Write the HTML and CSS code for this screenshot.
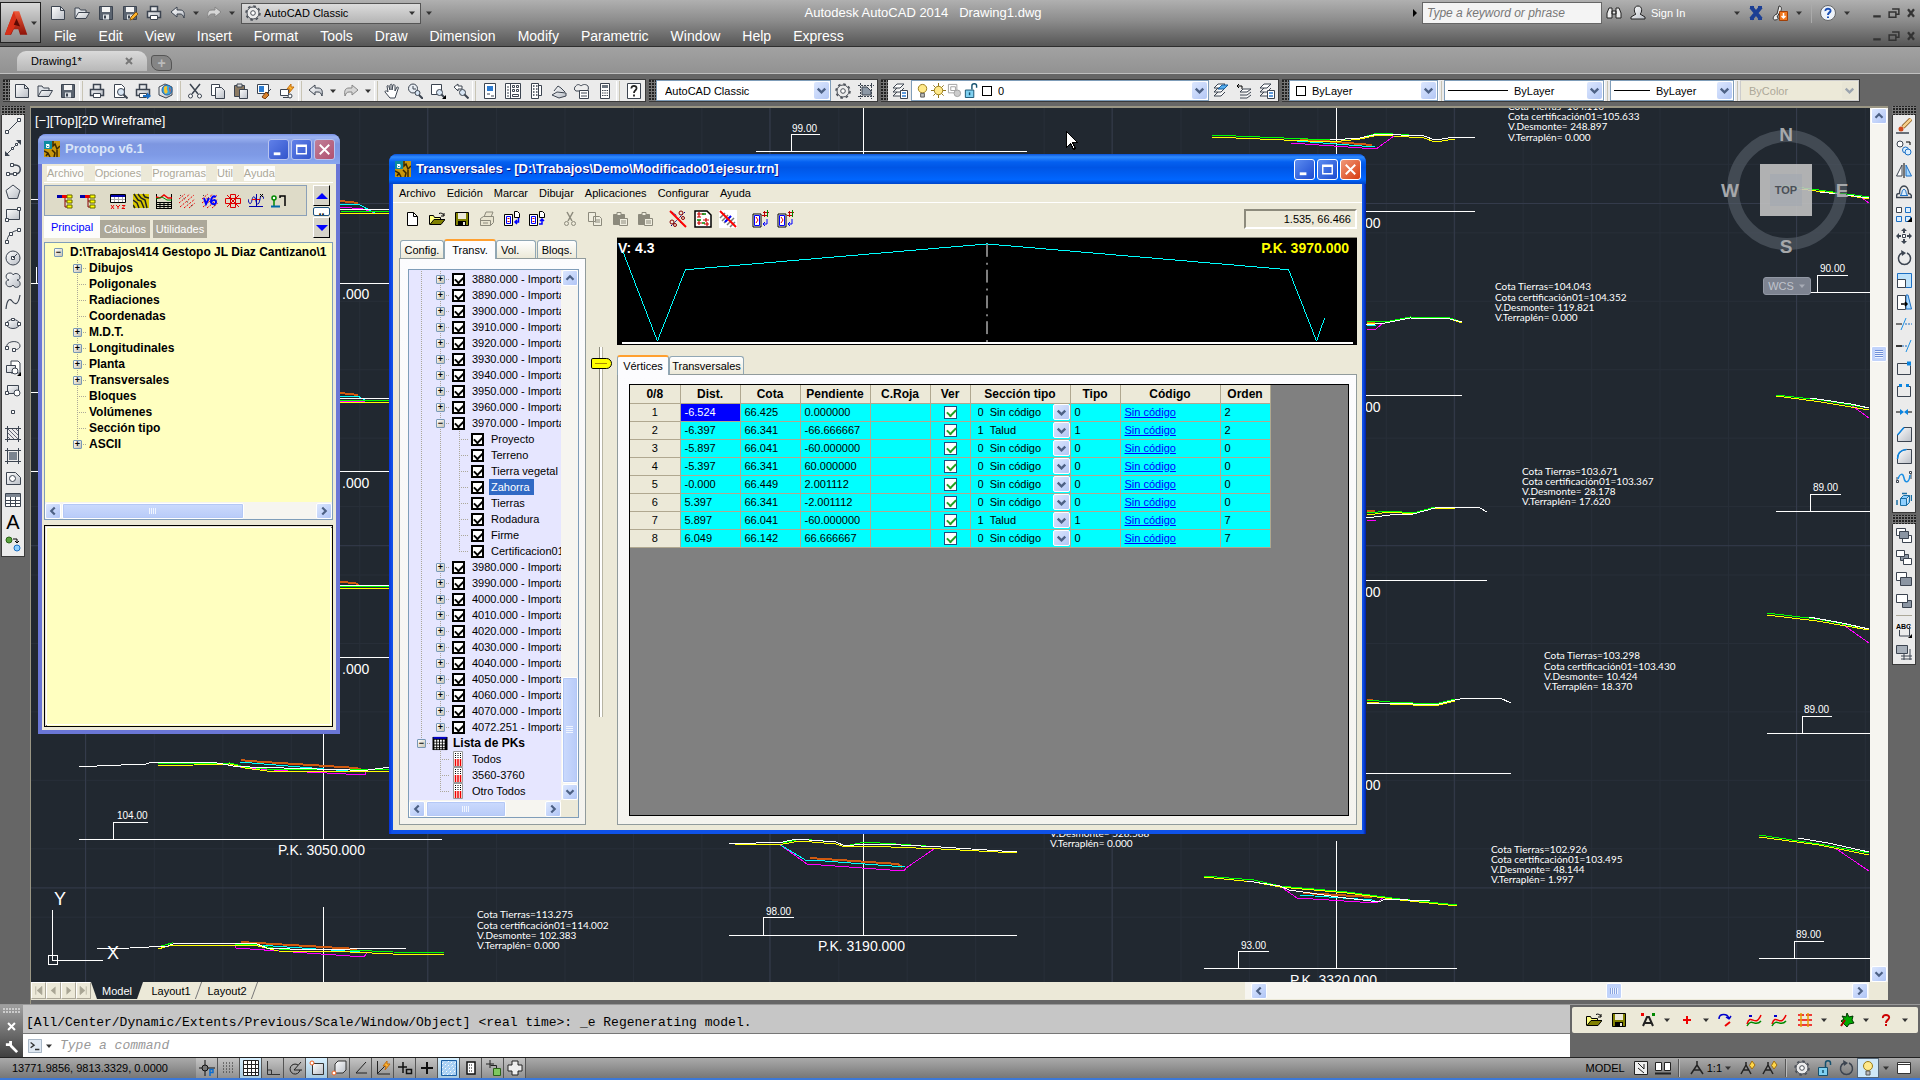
FILE: index.html
```html
<!DOCTYPE html>
<html lang="es">
<head>
<meta charset="utf-8">
<title>Autodesk AutoCAD 2014 - Drawing1.dwg</title>
<link rel="stylesheet" href="styles.css">
</head>
<body>
<svg class="defs" aria-hidden="true">
<linearGradient id="gl" x1="0" y1="0" x2="1" y2="1"><stop offset="0" stop-color="#fff"/><stop offset="1" stop-color="#b9bec6"/></linearGradient>
<linearGradient id="gr" x1="0" y1="0" x2="0" y2="1"><stop offset="0" stop-color="#f05a3a"/><stop offset="1" stop-color="#8e1208"/></linearGradient>
<g fill="none" stroke="#3c4450" stroke-width="1">
<symbol id="new" viewBox="0 0 16 16"><path d="M1.500 1.500h9l4 4v9h-13z" fill="url(#gl)" stroke="#3c4450"/><path d="M10.500 1.500v4h4" fill="none" stroke="#3c4450"/></symbol>
<symbol id="open" viewBox="0 0 16 16"><path d="M1 13V3h4l1.500 2H12v3" fill="#dfe3e8" stroke="#3c4450"/><path d="M1 13.500 4.500 7.500h11L12 13.500z" fill="url(#gl)" stroke="#3c4450"/></symbol>
<symbol id="save" viewBox="0 0 16 16"><path d="M1.500 1.500h13v13h-13z" fill="#5b6470" stroke="#3c4450"/><path d="M4 2h8v5H4z" fill="#f4f4f4"/><path d="M5 9.500h6v5H5z" fill="#e0e4e8"/><path d="M6 10.500h2v3H6z" fill="#3c4450"/></symbol>
<symbol id="saveas" viewBox="0 0 16 16"><use href="#save"/><path d="m8 15 1-3 5-5 2 2-5 5z" fill="#ffb52e" stroke="#8a5a10"/></symbol>
<symbol id="print" viewBox="0 0 16 16"><path d="M4.500 6V1.500h7V6M1.500 6.500h13v6h-13z" fill="url(#gl)" stroke="#3c4450" stroke-width="1.500"/><path d="M4.500 10.500h7v4h-7z" fill="#fff" stroke="#3c4450"/></symbol>
<symbol id="preview" viewBox="0 0 16 16"><path d="M2.500 1.500h7l3 3v10h-10z" fill="#fff" stroke="#3c4450"/><circle cx="9" cy="9" r="3.500" fill="#d8e6f5" stroke="#3c4450"/><path d="m11.500 11.500 4 4" stroke="#3c4450" stroke-width="2"/></symbol>
<symbol id="publish" viewBox="0 0 16 16"><use href="#print"/><path d="M8 12h4v-2.500l4 3.500-4 3.500V14H8z" fill="#1b6fc4"/></symbol>
<symbol id="globe" viewBox="0 0 16 16"><path d="m1 4 6-3 7 3v8l-6 3-7-3z" fill="url(#gl)" stroke="#3c4450"/><circle cx="9" cy="7" r="5" fill="#3ba7e0" stroke="#2560a0"/><path d="M6 4c2-2 4-1 3 1s2 3 0 5-3-1-3-3z" fill="#f4c430"/><path d="M11 4c2 1 2 4 1 6z" fill="#e0442c"/></symbol>
<symbol id="cut" viewBox="0 0 16 16"><path d="m3 1 8 10M13 1 5 11" stroke="#3c4450" stroke-width="1.500"/><circle cx="3.500" cy="13" r="2" fill="#fff" stroke="#3c4450"/><circle cx="12.500" cy="13" r="2" fill="#fff" stroke="#3c4450"/></symbol>
<symbol id="copy" viewBox="0 0 16 16"><path d="M1.500 1.500h8v11h-8z" fill="#fff" stroke="#3c4450"/><path d="M5.500 4.500h6l3 3v8h-9z" fill="url(#gl)" stroke="#3c4450"/></symbol>
<symbol id="paste" viewBox="0 0 16 16"><path d="M1.500 2.500h10v11h-10z" fill="#8b7a62" stroke="#3c4450"/><path d="M4 1h5v3H4z" fill="#ddd" stroke="#3c4450"/><path d="M6.500 6.500h8v9h-8z" fill="url(#gl)" stroke="#3c4450"/></symbol>
<symbol id="match" viewBox="0 0 16 16"><path d="M1.500 1.500h11v9h-11z" fill="#fff" stroke="#3c4450"/><path d="M3 3h5v6H3z" fill="#2c7bd0"/><path d="m15 6-5 5" stroke="#3c4450"/><path d="m6 14 4-5 3 3-4 4z" fill="#d8822c" stroke="#7a3c0c"/></symbol>
<symbol id="block" viewBox="0 0 16 16"><path d="M1.500 6.500h8v6h-8zM4 14.500h8" fill="#fff" stroke="#3c4450"/><circle cx="11" cy="13" r="2" fill="#fff" stroke="#3c4450"/><path d="m12 1-4 5h3l-1 4 5-6h-3z" fill="#ffb52e" stroke="#c06c10"/></symbol>
<symbol id="undo" viewBox="0 0 16 16"><path d="M1 7 7 2v3h3c4 0 5 3 4 8-1-3-2-4-4-4H7v3z" fill="url(#gl)" stroke="#3c4450"/></symbol>
<symbol id="redo" viewBox="0 0 16 16"><path d="M15 7 9 2v3H6C2 5 1 8 2 13c1-3 2-4 4-4h3v3z" fill="#d6d6d6" stroke="#858585"/></symbol>
<symbol id="pan" viewBox="0 0 16 16"><path d="M6 15 1 9c0-2 2-1 3 0L3 3c1-1 2 0 2 1l1 3V2c1-1 2-1 2 0v5l1-5c1-1 2 0 2 1v5l2-4c1 0 2 0 1 2l-2 6-1 3z" fill="#fff" stroke="#3c4450"/></symbol>
<symbol id="zoomrt" viewBox="0 0 16 16"><circle cx="6" cy="5.500" r="4.500" fill="#e8edf3" stroke="#3c4450"/><path d="M6 3v3h3" fill="none" stroke="#3c4450"/><circle cx="10.500" cy="10" r="2.500" fill="#d8e6f5" stroke="#3c4450"/><path d="m12 12 4 4" stroke="#3c4450" stroke-width="2"/></symbol>
<symbol id="zoomw" viewBox="0 0 16 16"><path d="M1.500 1.500h10v10h-10z" fill="#fff" stroke="#3c4450"/><circle cx="9.500" cy="9.500" r="3" fill="#d8e6f5" stroke="#3c4450"/><path d="m11.500 11.500 3 3" stroke="#3c4450" stroke-width="2"/><path d="M16 12v4h-4z" fill="#000"/></symbol>
<symbol id="zoomp" viewBox="0 0 16 16"><path d="m1 4 4-3v2h4v3H5v2z" fill="#fff" stroke="#3c4450"/><circle cx="9.500" cy="9.500" r="3" fill="#d8e6f5" stroke="#3c4450"/><path d="m11.500 11.500 4 4" stroke="#3c4450" stroke-width="2"/></symbol>
<symbol id="props" viewBox="0 0 16 16"><path d="M2.500 .5h11v15h-11z" fill="#fff" stroke="#3c4450"/><path d="M5 3h6v5H5z" fill="#2c7bd0"/><path d="M5 11h3M9 13h3" stroke="#3c4450"/></symbol>
<symbol id="dcenter" viewBox="0 0 16 16"><path d="M.5 .5h15v15H.5zM5.500 .5v15" fill="#fff" stroke="#3c4450"/><path d="M2 4h2M2 7h2M2 10h2M2 13h2M7.500 2.500h2v2h-2zM11.500 2.500h2v2h-2zM7.500 6.500h2v2h-2zM11.500 6.500h2v2h-2zM7.500 11.500h6v2h-6z" fill="none" stroke="#3c4450"/></symbol>
<symbol id="palette" viewBox="0 0 16 16"><path d="M3.500 .5h7v15h-7zM10.500 2.500h3v10h-3" fill="#fff" stroke="#3c4450"/><path d="M5 3h1.500M5 6h1.500M5 9h1.500M5 12h1.500M8 3h1.500M8 6h1.500M8 9h1.500M8 12h1.500" stroke="#3c4450" stroke-width="1.500"/></symbol>
<symbol id="sheet" viewBox="0 0 16 16"><path d="m1 12 5-3 9 1v3l-7 2zM3 8l4-5 3 2 4 4" fill="url(#gl)" stroke="#3c4450"/></symbol>
<symbol id="markup" viewBox="0 0 16 16"><path d="M1 4c2-3 4-3 6-1 2-2 5-2 7 0 1 3 0 4-1 5H2C0 7 0 5 1 4z" fill="#eee" stroke="#3c4450"/><path d="M5.500 7.500h9v8h-9z" fill="#fff" stroke="#3c4450"/><path d="M7 10h6M7 13h6" stroke="#3c4450"/></symbol>
<symbol id="calc" viewBox="0 0 16 16"><path d="M3.500 .5h9v15h-9z" fill="#fff" stroke="#3c4450"/><path d="M5 2h6v3H5z" fill="#6c7580"/><path d="M5 7.500h6M5 10h6M5 12.500h6" stroke="#3c4450" stroke-dasharray="1.500 .8"/></symbol>
<symbol id="help" viewBox="0 0 16 16"><path d="M1.500 .5h13v15h-13z" fill="#fff" stroke="#3c4450"/><path d="M5.500 5.500C5 2 11 2 10.500 5.500 10 8 8 7 8 10M8 11.500v2" fill="none" stroke="#222" stroke-width="1.800"/></symbol>
<symbol id="gear" viewBox="0 0 16 16"><circle cx="8" cy="8" r="6" fill="#ececec" stroke="#4a4f57"/><circle cx="8" cy="8" r="7" fill="none" stroke="#4a4f57" stroke-width="1.500" stroke-dasharray="2.700 2.800"/><circle cx="8" cy="8" r="2.300" fill="#fff" stroke="#4a4f57"/></symbol>
<symbol id="wsp" viewBox="0 0 16 16"><path d="M2.500 0v16M13.500 0v16M0 2.500h16M0 13.500h16" stroke="#3c4450" stroke-dasharray="2 1"/><path d="M4 12V4h5l4 4v4z" fill="#8c98a6" stroke="#3c4450"/></symbol>
<symbol id="layers" viewBox="0 0 16 16"><path d="m1 5 4-4h7L8 5zM1 9l4-4M1 9h7l4-4M1 13l4-4M1 13h7l4-4" fill="#fff" stroke="#3c4450"/></symbol>
<symbol id="layerp" viewBox="0 0 16 16"><use href="#layers"/><path d="M8.500 7.500h7v8h-7z" fill="#fff" stroke="#3c4450"/><path d="M10 10h4M10 13h4" stroke="#2c7bd0" stroke-width="1.500"/></symbol>
<symbol id="layer2" viewBox="0 0 16 16"><use href="#layers"/><path d="m5 6 4-4h6l-4 4z" fill="#55aef0" stroke="#1b5f9c"/></symbol>
<symbol id="layer3" viewBox="0 0 16 16"><path d="m4 9 3-3h8l-4 3zM4 12h7l4-3M4 15h7l4-3" fill="#fff" stroke="#3c4450"/><path d="M1 3h5v3M1 3l2-2M1 3l2 2" fill="none" stroke="#000"/></symbol>
<symbol id="bulb" viewBox="0 0 16 16"><circle cx="8" cy="6" r="4.500" fill="#ffe98a" stroke="#9a7b18"/><path d="M6 11h4v4H6z" fill="#bbb" stroke="#555"/></symbol>
<symbol id="sun" viewBox="0 0 16 16"><path d="M8 0v16M0 8h16M2.500 2.500l11 11M13.500 2.500l-11 11" stroke="#8a6d10"/><circle cx="8" cy="8" r="4.500" fill="#ffe98a" stroke="#9a7b18"/></symbol>
<symbol id="vpf" viewBox="0 0 16 16"><path d="M1.500 1.500h9v9h-9zM4 4h5v4H4z" fill="#fff" stroke="#a0a0a0"/><circle cx="11" cy="11" r="3.500" fill="#ccc" stroke="#a0a0a0"/></symbol>
<symbol id="lock" viewBox="0 0 16 16"><path d="M9.500 7V3c0-3 5-3 5 0v2" fill="none" stroke="#14506e" stroke-width="1.500"/><path d="M2.500 7.500h9v8h-9z" fill="#7fd0f0" stroke="#14506e"/><path d="M7 10v3" stroke="#14506e" stroke-width="1.500"/></symbol>
<symbol id="down" viewBox="0 0 16 16"><path d="m4 6 4 4 4-4" fill="none" stroke="#4d6185" stroke-width="2.500"/></symbol>
<symbol id="tri" viewBox="0 0 8 8"><path d="M1 2.500h6L4 6z" fill="#333"/></symbol>
<symbol id="line" viewBox="0 0 16 16"><path d="M2 14 14 2" stroke="#3c4450"/><path d="M.5 12.500h3v3h-3zM12.500 .5h3v3h-3z" fill="#fff" stroke="#3c4450"/></symbol>
<symbol id="xline" viewBox="0 0 16 16"><path d="M2 14 14 2" fill="none" stroke="#3c4450"/><path d="M16 0v5l-5-5zM0 16v-5l5 5z" fill="#3c4450"/><path d="M6.500 7.500h2v2h-2zM10.500 3.500h2v2h-2z" fill="#fff" stroke="#3c4450"/></symbol>
<symbol id="pline" viewBox="0 0 16 16"><path d="M6 3h4c7 0 7 9 0 9H3" fill="none" stroke="#3c4450" stroke-width="1.500"/><path d="M5.500 1.500h3v3h-3zM1.500 10.500h3v3h-3zM8.500 10.500h3v3h-3z" fill="#fff" stroke="#3c4450"/></symbol>
<symbol id="poly" viewBox="0 0 16 16"><path d="m8 1 7 5.500-2.500 8h-9L1 6.500z" fill="url(#gl)" stroke="#3c4450"/></symbol>
<symbol id="rect" viewBox="0 0 16 16"><path d="M1.500 3.500h13v10h-13z" fill="url(#gl)" stroke="#3c4450"/><path d="M.5 12.500h3v3h-3zM12.500 1.500h3v3h-3z" fill="#fff" stroke="#3c4450"/></symbol>
<symbol id="arc" viewBox="0 0 16 16"><path d="M2 14C2 7 7 3 14 2" fill="none" stroke="#3c4450"/><path d="M.5 12.500h3v3h-3zM4.500 4.500h3v3h-3zM12.500 .5h3v3h-3z" fill="#fff" stroke="#3c4450"/></symbol>
<symbol id="circle" viewBox="0 0 16 16"><circle cx="8" cy="8" r="7" fill="url(#gl)" stroke="#3c4450"/><path d="m8 8 4-4M6.500 6.500h3v3h-3z" stroke="#3c4450" fill="#fff"/></symbol>
<symbol id="cloud" viewBox="0 0 16 16"><path d="M4 8C0 7 0 1 5 1c2 0 3 1 3 2 2-3 7-1 7 2 0 2-1 3-3 3 4 1 4 6 1 7-2 1-4 0-5-2-2 3-7 2-7-2 0-2 1-3 3-3z" fill="url(#gl)" stroke="#3c4450"/></symbol>
<symbol id="spline" viewBox="0 0 16 16"><path d="M1 15C2 5 5 4 7 7s6 6 8-6" fill="none" stroke="#3c4450" stroke-width="1.200"/></symbol>
<symbol id="ellipse" viewBox="0 0 16 16"><ellipse cx="8" cy="8" rx="6.500" ry="4.500" fill="url(#gl)" stroke="#3c4450"/><path d="M.5 6.500h3v3h-3zM12.500 6.500h3v3h-3zM6.500 2.500h3v2h-3z" fill="#fff" stroke="#3c4450"/></symbol>
<symbol id="earc" viewBox="0 0 16 16"><path d="M2 9c-2-6 13-8 13-1 0 3-4 4-7 4" fill="none" stroke="#3c4450"/><path d="M.5 8.500h3v3h-3zM7.500 10.500h3v3h-3z" fill="#fff" stroke="#3c4450"/></symbol>
<symbol id="insert" viewBox="0 0 16 16"><path d="M6 1h7l2 2v10H6z" fill="#fff" stroke="#3c4450"/><path d="M1.500 5.500h9v7h-9z" fill="url(#gl)" stroke="#3c4450"/><circle cx="10" cy="11" r="3" fill="#fff" stroke="#3c4450"/><path d="M16 12v4h-4z" fill="#000"/></symbol>
<symbol id="mkblock" viewBox="0 0 16 16"><path d="M2.500 3.500h11v8h-11z" fill="url(#gl)" stroke="#3c4450"/><circle cx="12" cy="11" r="3" fill="#fff" stroke="#3c4450"/><path d="M.5 9.500h3v3h-3z" fill="#fff" stroke="#3c4450"/></symbol>
<symbol id="point" viewBox="0 0 16 16"><path d="M6.500 6.500h3v3h-3z" fill="#fff" stroke="#3c4450"/></symbol>
<symbol id="hatch" viewBox="0 0 16 16"><path d="M2.500 0v16M13.500 0v16M0 2.500h16M0 13.500h16" stroke="#3c4450"/><path d="m3 3 10 10M3 7l6 6M7 3l6 6M3 11l2 2M11 3l2 2" stroke="#667"/></symbol>
<symbol id="grad" viewBox="0 0 16 16"><path d="M2.500 0v16M13.500 0v16M0 2.500h16M0 13.500h16" stroke="#3c4450"/><path d="M4 4h8v8H4z" fill="#7b8490"/></symbol>
<symbol id="region" viewBox="0 0 16 16"><path d="M1.500 2.500h9l5 5v7h-14z" fill="url(#gl)" stroke="#3c4450"/><circle cx="7.500" cy="8.500" r="3" fill="#fff" stroke="#3c4450"/></symbol>
<symbol id="table" viewBox="0 0 16 16"><path d="M.5 1.500h15v13H.5z" fill="#fff" stroke="#3c4450"/><path d="M1 2h14v3H1z" fill="#7b8490"/><path d="M.5 8.500h15M.5 11.500h15M5.500 5v9M10.500 5v9" stroke="#3c4450"/></symbol>
<symbol id="addsel" viewBox="0 0 16 16"><circle cx="4" cy="4" r="3" fill="#5aa33c" stroke="#2c6418"/><circle cx="12" cy="12" r="3" fill="#8fd0ff" stroke="#1b6fc4"/><path d="M8 3h4v4M10 5l2 2 2-2" fill="none" stroke="#000"/></symbol>
<symbol id="erase" viewBox="0 0 16 16"><path d="M15 1 7 9" stroke="#7a4a10" stroke-width="4"/><path d="M15 1 7 9" stroke="#f6cf8a" stroke-width="2.500"/><circle cx="5" cy="11" r="2.500" fill="#d14a1c"/><path d="M0 15h13" stroke="#3c4450" stroke-width="1.500"/></symbol>
<symbol id="copyo" viewBox="0 0 16 16"><circle cx="4" cy="4" r="3" fill="#fff" stroke="#3c4450"/><circle cx="9.500" cy="10" r="3" fill="#dcefff" stroke="#1b6fc4"/><circle cx="12" cy="12" r="3" fill="#dcefff" stroke="#1b6fc4"/><path d="M10 2h4v3" fill="none" stroke="#000"/></symbol>
<symbol id="mirror" viewBox="0 0 16 16"><path d="M6 3v11H.5z" fill="#fff" stroke="#3c4450"/><path d="M10 3v11h5.500z" fill="#a8d8ff" stroke="#1b6fc4"/><path d="M8 1v15" stroke="#000"/></symbol>
<symbol id="offset" viewBox="0 0 16 16"><path d="M.5 13.500h15c0-4-2-4-3-4 0-10-9-10-9 0-2 0-3 0-3 4z" fill="none" stroke="#3c4450" stroke-width="1.500"/><path d="M4 11.500h8c-3-1-1-6-4-6s-1 5-4 6z" fill="#dcefff" stroke="#1b6fc4"/></symbol>
<symbol id="array" viewBox="0 0 16 16"><path d="M.5 1.500h5v5h-5z" fill="#fff" stroke="#3c4450"/><path d="M9.500 1.500h5v5h-5zM.5 10.500h5v5h-5zM9.500 10.500h5v5h-5z" fill="#dcefff" stroke="#1b6fc4"/><path d="M16 11v5h-5z" fill="#000"/></symbol>
<symbol id="move" viewBox="0 0 16 16"><path d="M6.500 6.500h3v3h-3z" fill="#fff" stroke="#3c4450"/><path d="m8 0 3 3H9v2H7V3H5zM8 16l3-3H9v-2H7v2H5zM0 8l3-3v2h2v2H3v2zM16 8l-3-3v2h-2v2h2v2z" fill="#3c4450"/></symbol>
<symbol id="rotate" viewBox="0 0 16 16"><path d="M6 3a6 6 0 1 0 5 0" fill="none" stroke="#3c4450" stroke-width="1.500"/><path d="m5 0 5 3-4 3z" fill="#3c4450"/></symbol>
<symbol id="scale" viewBox="0 0 16 16"><path d="M1.500 1.500h14v14h-14z" fill="#bfe2fa" stroke="#1b6fc4"/><path d="M1.500 7.500h8v8h-8z" fill="#fff" stroke="#3c4450"/></symbol>
<symbol id="stretch" viewBox="0 0 16 16"><path d="M10 1h2l3.500 14H10z" fill="#a8d8ff" stroke="#1b6fc4"/><path d="M1.500 1.500h8v14h-8z" fill="#fff" stroke="#3c4450"/><path d="M5 10h6M9 8l2 2-2 2" fill="none" stroke="#000" stroke-width="1.500"/></symbol>
<symbol id="trim" viewBox="0 0 16 16"><path d="M0 8h6" stroke="#000"/><path d="M9 8h7" stroke="#1b6fc4" stroke-dasharray="2 1"/><path d="M10 2 5 14" stroke="#1b8fe4"/></symbol>
<symbol id="extend" viewBox="0 0 16 16"><path d="M0 8h6" stroke="#000" stroke-width="1.500"/><path d="M6 8h6" stroke="#1b6fc4" stroke-dasharray="2 1"/><path d="m15 2-5 12" stroke="#1b8fe4"/></symbol>
<symbol id="breakp" viewBox="0 0 16 16"><path d="M11 3.500H1.500v11h13v-9" fill="none" stroke="#3c4450"/><path d="M11 1.500h4v4h-4z" fill="#0a84e0"/></symbol>
<symbol id="break" viewBox="0 0 16 16"><path d="M3 4.500H1.500v10h13v-10H13" fill="none" stroke="#3c4450"/><path d="M3 2h3v3H3zM10 2h3v3h-3z" fill="#0a84e0"/></symbol>
<symbol id="join" viewBox="0 0 16 16"><path d="M0 8h5M11 8h5" stroke="#000"/><path d="m4 5 4 3-4 3zM12 5 8 8l4 3z" fill="#0a84e0"/></symbol>
<symbol id="chamfer" viewBox="0 0 16 16"><path d="M1.500 9 8 1.500h7.500v14h-14z" fill="url(#gl)" stroke="#3c4450"/><path d="M1.500 9 8 1.500" stroke="#0a84e0" stroke-width="1.500"/></symbol>
<symbol id="fillet" viewBox="0 0 16 16"><path d="M1.500 15.500V11c0-6 4-9 9-9.500h5v14z" fill="url(#gl)" stroke="#3c4450"/><path d="M1.500 11c0-6 4-9 9-9.500" fill="none" stroke="#0a84e0" stroke-width="1.500"/></symbol>
<symbol id="blend" viewBox="0 0 16 16"><path d="M1 13V7M15 3v6" stroke="#3c4450"/><path d="M2 9c2-6 5-6 6-1s5 6 6-3" fill="none" stroke="#1b8fe4" stroke-width="1.500"/><path d="M.5 10.500h2v2h-2zM13.500 1.500h2v2h-2z" fill="#fff" stroke="#3c4450"/></symbol>
<symbol id="explode" viewBox="0 0 16 16"><path d="M4.500 6.500h6v7h-6zM4.500 6.500l3-3h6l-3 3M10.500 13.500l3-3v-7" fill="#8fd0ff" stroke="#1b6fa4"/><path d="M1 8v5M6 1.500h5M15.500 3v6" stroke="#1b6fa4" stroke-width="1.500"/></symbol>
<symbol id="front" viewBox="0 0 16 16"><path d="M.5 1.500h9v7h-9zM6.500 8.500h9v7h-9z" fill="#fff" stroke="#3c4450"/><path d="M3.500 4.500h9v7h-9z" fill="#8b95a2" stroke="#3c4450"/></symbol>
<symbol id="back" viewBox="0 0 16 16"><path d="M4.500 5.500h8v6h-8z" fill="#8b95a2" stroke="#3c4450"/><path d="M.5 1.500h8v6h-8zM7.500 9.500h8v6h-8z" fill="#fff" stroke="#3c4450"/></symbol>
<symbol id="above" viewBox="0 0 16 16"><path d="M.5 1.500h10v8h-10z" fill="#fff" stroke="#3c4450"/><path d="M4.500 6.500h11v8h-11z" fill="#8b95a2" stroke="#3c4450"/></symbol>
<symbol id="under" viewBox="0 0 16 16"><path d="M6.500 7.500h9v7h-9z" fill="#8b95a2" stroke="#3c4450"/><path d="M.5 1.500h11v8h-11z" fill="#fff" stroke="#3c4450"/></symbol>
<symbol id="abc" viewBox="0 0 16 16"><text x="0" y="7" font-size="7" font-weight="bold" fill="#000" stroke="none">ABC</text><path d="M3.500 8v6h10V4" fill="none" stroke="#3c4450"/><path d="M16 12v4h-4z" fill="#000"/></symbol>
<symbol id="hback" viewBox="0 0 16 16"><path d="M.5 1.500h11v8h-11z" fill="#a8b0ba" stroke="#3c4450"/><path d="M5 12h11M5 15h11M8 10v6M14 5v11" stroke="#3c4450"/></symbol>
<symbol id="pnew" viewBox="0 0 16 16"><path d="M3.500 1.500h6l4 4v9h-10z" fill="#fff" stroke="#000"/><path d="M9.500 1.500v4h4" fill="none" stroke="#000"/></symbol>
<symbol id="popen" viewBox="0 0 16 16"><path d="M.5 13.500v-9h4l1 2h6v2" fill="#ffff80" stroke="#000"/><path d="m1 13.500 4-5h11l-4 5z" fill="#808000" stroke="#000"/><path d="M10 2.500c2-1 4 0 5 2M15 2v3h-3" fill="none" stroke="#000"/></symbol>
<symbol id="psave" viewBox="0 0 16 16"><path d="M1.500 1.500h13v13h-13z" fill="#808000" stroke="#000"/><path d="M4 2h8v6H4z" fill="#ece9d8"/><path d="M4 10h8v5H4z" fill="#000"/><path d="M9 11h2v3H9z" fill="#ece9d8"/></symbol>
<symbol id="pprint" viewBox="0 0 16 16"><path d="m5 6 2-5h7l-2 5M1.500 7.500l3-2h10v6l-3 3h-10zM1.500 9.500h10v5M4 12h5" fill="#e8e4d0" stroke="#8c8a7c"/></symbol>
<symbol id="pin" viewBox="0 0 16 16"><path d="M.5 3.500h8v11h-8zM10.500 .5h3l2 2v4h-5z" fill="#fff" stroke="#000"/><path d="M2.500 5.500h4v7h-4z" fill="#fff" stroke="#00f"/><path d="M3.500 7.500h2M3.500 10.500h2" stroke="#c00"/><path d="M14.500 7v4h-4M13 9l-2 2 2 2" fill="none" stroke="#00f" stroke-width="1.500"/></symbol>
<symbol id="pout" viewBox="0 0 16 16"><path d="M.5 3.500h8v11h-8zM10.500 .5h3l2 2v4h-5z" fill="#fff" stroke="#000"/><path d="M2.500 5.500h4v7h-4z" fill="#fff" stroke="#00f"/><path d="M3.500 7.500h2M3.500 10.500h2" stroke="#c00"/><path d="M10 13h3V8M11 10l2-2 2 2" fill="none" stroke="#00f" stroke-width="1.500"/></symbol>
<symbol id="pcut" viewBox="0 0 16 16"><path d="m5 1 5 9M11 1 6 10" stroke="#8c8a7c" stroke-width="1.500"/><circle cx="4.500" cy="12.500" r="2" fill="none" stroke="#8c8a7c"/><circle cx="11.500" cy="12.500" r="2" fill="none" stroke="#8c8a7c"/></symbol>
<symbol id="pcopy" viewBox="0 0 16 16"><path d="M1.500 1.500h7v9h-7zM6.500 5.500h6l2 2v7h-8zM8 9h5M8 11h5" fill="#f0eee0" stroke="#8c8a7c"/></symbol>
<symbol id="ppaste" viewBox="0 0 16 16"><path d="M1.500 3.500h11v10h-11z" fill="#8c8a7c" stroke="#8c8a7c"/><path d="M5 1.500h4v3H5zM7.500 7.500h8v7h-8z" fill="#f0eee0" stroke="#8c8a7c"/><path d="M9 10h5M9 12h5" stroke="#8c8a7c"/></symbol>
<symbol id="pscis" viewBox="0 0 18 18"><path d="m2 16 14-14M3 2l5 4M11 12l5 4" stroke="#008" stroke-dasharray="2 1"/><circle cx="3" cy="12" r="2" stroke="#800" fill="none"/><circle cx="12" cy="3" r="2" stroke="#800" fill="none"/><circle cx="14" cy="8" r="1.500" stroke="#800" fill="none"/><circle cx="6" cy="15" r="1.500" stroke="#800" fill="none"/><path d="m1 1 16 16" stroke="#f00" stroke-width="2"/></symbol>
<symbol id="psheet" viewBox="0 0 18 18"><path d="M1 1h12l4 4v12H1z" fill="#fff" stroke="#000" stroke-width="1.500"/><path d="M3 4h7M3 7h4M9 10h6M3 13h5M10 14h5M5 2v5M5 10v5M12 8v4M13 12v4" stroke="#c00" stroke-width="1.200"/><path d="M8 4h4M3 10h4M8 13h3" stroke="#080" stroke-width="1.500"/></symbol>
<symbol id="phatch" viewBox="0 0 18 18"><path d="M0 0h18v18H0z" fill="#fff"/><path d="m1 8 5-5M3 11l6-6M5 13l7-7M8 15l7-7M11 17l5-5" stroke="#777" stroke-width="1.500"/><path d="m6 12 6-6" stroke="#00f" stroke-width="2"/><path d="m1 1 16 16" stroke="#f00" stroke-width="2"/></symbol>
<symbol id="pexp" viewBox="0 0 18 18"><path d="M1 4h8v13H1z" fill="#fff" stroke="#000"/><path d="M2.500 5.500h5v10h-5z" fill="#fff" stroke="#00f"/><path d="m4 7 2 3-2 3" stroke="#e00" fill="none"/><path d="M11 2.500h6M10 5.500h6M12.500 1v6" stroke="#b00"/><path d="M15.500 0v7" stroke="#080"/><path d="M15 9v5h-4M13 12l-2 2 2 2" fill="none" stroke="#00f"/></symbol>
<symbol id="logo" viewBox="0 0 16 16"><path d="M0 0h16v16H0z" fill="#c8960c"/><path d="M9 0v5l2-2 2 5 3-3M0 10l4 2 2 4M8 9l3 3-1 4M13 9v7M2 15l2-3" stroke="#3a2800" stroke-width="1.500" fill="none"/><path d="M0 0h8v8H0z" fill="#0c8ca0"/><path d="M2 3.500h3v3H2.500v-2H5" stroke="#fff" fill="none"/></symbol>
<symbol id="tree1" viewBox="0 0 16 16"><path d="M0 2h5v3H0z" fill="#00a"/><path d="M5 2h5v3H5z" fill="#e00"/><path d="M8 5v9h3M8 8h3" stroke="#800" fill="none"/><path d="M10 2h5v3h-5zM10 7h5v3h-5zM10 12h5v3h-5z" fill="#ff0" stroke="#660"/></symbol>
<symbol id="xyz" viewBox="0 0 16 16"><path d="M.5 1.500h15v8H.5z" fill="#fff" stroke="#000"/><path d="M1 2h14v2H1z" fill="#00a"/><path d="M1 6.500h14M4.500 4v5M8.500 4v5M12.500 4v5" stroke="#aaa"/><path d="m1 12 3 4M4 12l-3 4M6 12l2 2 2-2M8 14v2M12 12.500h3l-3 3h3" stroke="#e00" fill="none"/></symbol>
<symbol id="terr" viewBox="0 0 16 16"><path d="M0 1h16v14H0z" fill="#d8c800"/><path d="m1 1 4 6 3 1 3 7M5 1l3 4 4 2 2 8M10 1l2 3 4 1M0 7l4 3 2 5M0 12l2 3" stroke="#222" fill="none" stroke-width="1.500"/></symbol>
<symbol id="prof" viewBox="0 0 16 16"><path d="M.5 1v14M15.500 1v14M0 9.500h16M0 11.500h16M0 13.500h16M0 15.500h16M4 9v7M8 9v7M12 9v7" stroke="#000"/><path d="m0 4 4 1 4-3 4 3h4" stroke="#e00" fill="none" stroke-width="1.500"/><path d="m0 6 6-2 5 3h5" stroke="#080" fill="none"/></symbol>
<symbol id="dots" viewBox="0 0 16 16"><path d="m0 6 6-5M0 10 11 1M1 14 15 2M5 15 16 6M10 15l6-5" stroke="#e00" stroke-dasharray="2 1.500"/><path d="M1 2l14 13" stroke="#000" stroke-dasharray="1 4"/></symbol>
<symbol id="v6" viewBox="0 0 16 16"><use href="#dots"/><path d="m2 5 2 6 3-6M14 4c-3-2-5 1-5 4 0 4 5 4 5 1 0-3-4-2-5 0" stroke="#00f" stroke-width="2" fill="none"/></symbol>
<symbol id="flower" viewBox="0 0 16 16"><path d="M5.500 1.500h5v4h-5zM5.500 10.500h5v4h-5zM.5 5.500h5v5h-5zM10.500 5.500h5v5h-5zM2 2l12 12M14 2 2 14" stroke="#d00" fill="none"/></symbol>
<symbol id="wave" viewBox="0 0 16 16"><path d="M0 6c1 6 3 6 4 1s3-4 4 1 3 4 4-2 3-3 4 0" stroke="#00a" fill="none"/><path d="M4 6.500h8" stroke="#e00"/><path d="M1 13.500h14M8.500 1v12" stroke="#00a"/><path d="m12 1 3 3M15 1l-3 3" stroke="#000"/></symbol>
<symbol id="green" viewBox="0 0 16 16"><circle cx="3" cy="5" r="2" fill="#fff" stroke="#080" stroke-width="1.500"/><path d="M3 7v6" stroke="#080" stroke-width="1.500"/><path d="M9 5V3h5v10" stroke="#000" fill="none" stroke-width="1.500"/><path d="M0 13.500h9" stroke="#06a" stroke-width="2"/></symbol>
<symbol id="grid" viewBox="0 0 16 16"><path d="M0 1h16v14H0z" fill="#000"/><path d="M1 1h14v2H1z" fill="#00c"/><path d="M2 4h2v2H2zM5 4h2v2H5zM8 4h2v2H8zM11 4h2v2h-2zM2 7h2v2H2zM5 7h2v2H5zM8 7h2v2H8zM11 7h2v2h-2zM2 10h2v2H2zM5 10h2v2H5zM8 10h2v2H8zM11 10h2v2h-2zM2 13h2v1H2zM5 13h2v1H5zM8 13h2v1H8zM11 13h2v1h-2z" fill="#fff"/></symbol>
<symbol id="list" viewBox="0 0 10 16"><path d="M.5 .5h9v15h-9z" fill="#fff" stroke="#999"/><path d="M2.500 2v5M5 2v5M7.500 2v5" stroke="#000" stroke-dasharray="1 1"/><path d="M2.500 8v7M5 8v7M7.500 8v7" stroke="#e00" stroke-width="1.500"/></symbol>
<symbol id="wmin" viewBox="0 0 16 16"><path d="M3 11h10v3H3z" fill="#333"/></symbol>
<symbol id="wres" viewBox="0 0 16 16"><path d="M5.500 2.500h9v7h-3M1.500 6.500h9v7h-9z" fill="none" stroke="#333" stroke-width="2"/></symbol>
<symbol id="wclose" viewBox="0 0 16 16"><path d="m4 3 8 10M12 3 4 13" stroke="#333" stroke-width="3"/></symbol>
<symbol id="bino" viewBox="0 0 16 16"><path d="M1 13V8l2-5h3v10zM10 13V3h3l2 5v5zM6 6h4v3H6z" fill="#eee" stroke="#222"/></symbol>
<symbol id="user" viewBox="0 0 16 16"><path d="M8 1c5 0 4 7 2 8l5 3v2H1v-2l5-3C4 8 3 1 8 1z" fill="url(#gl)" stroke="#222"/></symbol>
<symbol id="exch" viewBox="0 0 16 16"><path d="m3 2 10 12M13 2 3 14" stroke="#1c3f94" stroke-width="4"/><path d="m2 2h4M10 2h4M2 14h4M10 14h4" stroke="#1c3f94" stroke-width="2"/></symbol>
<symbol id="conn" viewBox="0 0 16 16"><path d="M7 1c3 0 3 4 1 6l-3 5c3 1 0 3-2 3-3 0-2-5 2-6z" fill="#eee" stroke="#333"/><path d="M7.500 6.500h8v9h-8z" fill="#f07820" stroke="#a04008"/><path d="M11.500 8v5M9.500 11l2 2 2-2" stroke="#fff" fill="none" stroke-width="1.500"/></symbol>
<symbol id="qm" viewBox="0 0 16 16"><circle cx="8" cy="8" r="7.500" fill="#eef3fa" stroke="#666"/><path d="M5.500 6C5 3 11 3 10.500 6 10 8 8 7.500 8 10M8 11.500v1.500" fill="none" stroke="#1b4fb4" stroke-width="2"/></symbol>
<symbol id="s-snap" viewBox="0 0 16 16"><path d="M0 8h16M6 0v16" stroke="#111"/><circle cx="6" cy="8" r="3" fill="#777" stroke="#111"/><path d="M11 9v7M11 9.500h3v3h-3" stroke="#0a6cd0" fill="none" stroke-width="1.500"/></symbol>
<symbol id="s-dots" viewBox="0 0 16 16"><path d="M2 3h12M2 6h12M2 9h12M2 12h12" stroke="#222" stroke-dasharray="1 2"/></symbol>
<symbol id="s-grid" viewBox="0 0 16 16"><path d="M.5 .5h15v15H.5zM4.500 0v16M8.500 0v16M12.500 0v16M0 4.500h16M0 8.500h16M0 12.500h16" stroke="#222" fill="#fff"/></symbol>
<symbol id="s-ortho" viewBox="0 0 16 16"><path d="M2.500 1v13.500H15M2.500 10h4v4" stroke="#333" fill="none"/></symbol>
<symbol id="s-polar" viewBox="0 0 16 16"><path d="M11 5a5 5 0 1 0 2 5M7 10l7-8M7 10h8" stroke="#222" fill="none"/></symbol>
<symbol id="s-osnap" viewBox="0 0 16 16"><path d="M3.500 3.500h11v11h-11z" fill="url(#gl)" stroke="#333"/><circle cx="3" cy="3" r="2" fill="#fff" stroke="#f06020"/></symbol>
<symbol id="s-3d" viewBox="0 0 16 16"><path d="m4 4 3-3h8v9l-3 3H4z" fill="url(#gl)" stroke="#333"/><circle cx="3" cy="13" r="2" fill="#fff" stroke="#f06020"/></symbol>
<symbol id="s-ang" viewBox="0 0 16 16"><path d="M13 2 3 13h11" fill="none" stroke="#222"/></symbol>
<symbol id="s-ducs" viewBox="0 0 16 16"><path d="M2.500 1v13H15M3 13l9-9" fill="none" stroke="#222"/><path d="m12 1-4 5h3l-1 4 5-6h-3z" fill="#ffb52e" stroke="#c06c10"/></symbol>
<symbol id="s-dyn" viewBox="0 0 16 16"><path d="M6 2v11M1 7h9M9.500 9.500h5v4h-5z" fill="none" stroke="#111" stroke-width="1.500"/></symbol>
<symbol id="s-lwt" viewBox="0 0 16 16"><path d="M8 2v12M2 8h12" stroke="#111" stroke-width="2"/></symbol>
<symbol id="s-tpy" viewBox="0 0 16 16"><path d="M.5 .5h15v15H.5z" fill="#a8d0f4" stroke="#1b5fa4"/><path d="m1 4 3-3M1 8l7-7M1 12 12 1M2 15 15 2M6 15l9-9M10 15l5-5" stroke="#fff" stroke-dasharray="2 2"/></symbol>
<symbol id="s-qp" viewBox="0 0 16 16"><path d="M4 2h8v12H4z" fill="#fff" stroke="#111" stroke-width="1.500"/><path d="M6 5h4M6 8h4M6 11h4" stroke="#111" stroke-dasharray="1 1"/></symbol>
<symbol id="s-sc" viewBox="0 0 16 16"><path d="M5 0v8M1 4h8M5.500 5.500h6v6" fill="none" stroke="#222"/><path d="M8.500 8.500h7v7h-7z" fill="#7fc860" stroke="#2c6418"/></symbol>
<symbol id="s-am" viewBox="0 0 16 16"><path d="M5 1h6v4h4v6h-4v4H5v-4H1V5h4z" fill="#eee" stroke="#222"/></symbol>
<symbol id="s-model" viewBox="0 0 16 16"><path d="M1.500 1.500h13v13h-13z" fill="#eee" stroke="#222"/><path d="m5 3 6 6v-5M5 8l6 5" fill="none" stroke="#222"/></symbol>
<symbol id="s-qv" viewBox="0 0 16 16"><path d="M.5 2.500h6v8h-6zM9.500 2.500h6v8h-6z" fill="#fff" stroke="#222"/><path d="M0 13.500h16" stroke="#222" stroke-width="2"/></symbol>
<symbol id="compass" viewBox="0 0 16 16"><path d="M8 1v5M8 5l-6 9M8 5l6 9M5 10h6" stroke="#222" fill="none" stroke-width="1.500"/></symbol>
<symbol id="compassy" viewBox="0 0 16 16"><path d="M6 2v4M6 5l-5 9M6 5l5 9M3 10h6" stroke="#222" fill="none" stroke-width="1.500"/><path d="M9.500 5.500 12 1l3 4-3 4z" fill="#ffd84a" stroke="#a06c10"/></symbol>
<symbol id="pA" viewBox="0 0 16 16"><path d="m3 14 4-9h2l4 9M5 11h6" stroke="#222" stroke-width="2" fill="none"/><path d="M1 1h3v3H1z" fill="#e00"/><path d="M12 1h3v3h-3z" fill="#080"/></symbol>
<symbol id="pcross" viewBox="0 0 16 16"><path d="M8 4v8M4 8h8" stroke="#e00" stroke-width="2"/></symbol>
<symbol id="prot" viewBox="0 0 16 16"><path d="M2 7c0-6 9-6 10 0M12 7l-3-2M12 7l2-3" stroke="#00c" fill="none" stroke-width="1.500"/><path d="m8 14 5-4" stroke="#e00" stroke-width="2"/></symbol>
<symbol id="pcurve" viewBox="0 0 16 16"><path d="M1 12c4-12 8 5 14-9" stroke="#e00" fill="none" stroke-width="1.500"/><path d="M1 14c5-9 8 2 14-5" stroke="#080" fill="none" stroke-width="1.500"/><path d="M3 4h3" stroke="#00c" stroke-width="2"/></symbol>
<symbol id="pblocks" viewBox="0 0 16 16"><path d="M1 3h6M9 3h6M1 8h14M1 13h14" stroke="#e00" stroke-width="1.500"/><path d="M4 1v14M11 1v14" stroke="#e8a000" stroke-width="1.500"/></symbol>
<symbol id="ptree" viewBox="0 0 16 16"><path d="M8 15 2 9l3-2-2-3 4 1 1-4 2 4 4-1-1 4 2 3-5 1z" fill="#0a0" stroke="#030"/><path d="m2 14 4-6" stroke="#a00" stroke-width="2"/></symbol>
<symbol id="pq" viewBox="0 0 16 16"><path d="M5 6c-1-4 7-4 6 0-1 3-3 2-3 5M8 12v2" fill="none" stroke="#c00" stroke-width="2"/></symbol>
</g>
</svg>

<header class="top">
  <button class="app" aria-label="Application menu"><svg class="alogo" viewBox="0 0 30 30"><path d="M12 2h6l9 26h-8l-2-6h-5l-3 6H2z" fill="url(#gr)"/><path d="m12 2 4 12-8 14H2z" fill="#d83018"/><path d="m12 17 3-7 4 9z" fill="#5c0a04"/></svg><svg class="t"><use href="#tri"/></svg></button>
  <div class="topcol">
    <div class="trow">
      <div class="qat">
        <button aria-label="New"><svg><use href="#new"/></svg></button><button aria-label="Open"><svg><use href="#open"/></svg></button><button aria-label="Save"><svg><use href="#save"/></svg></button><button aria-label="Save as"><svg><use href="#saveas"/></svg></button><button aria-label="Plot"><svg><use href="#print"/></svg></button><button aria-label="Undo"><svg><use href="#undo"/></svg></button><button class="dd" aria-label="Undo list"><svg class="t"><use href="#tri"/></svg></button><button aria-label="Redo"><svg><use href="#redo"/></svg></button><button class="dd" aria-label="Redo list"><svg class="t"><use href="#tri"/></svg></button>
        <span class="qcombo"><svg class="i"><use href="#gear"/></svg><select aria-label="Workspace"><option>AutoCAD Classic</option></select><svg class="t"><use href="#tri"/></svg></span>
        <button class="dd" aria-label="Customize"><svg class="t"><use href="#tri"/></svg></button>
      </div>
      <h1>Autodesk AutoCAD 2014 &nbsp;&nbsp;Drawing1.dwg</h1>
      <div class="info">
        <svg class="t" viewBox="0 0 8 8"><path d="M2 0v8l4-4z" fill="#000"/></svg>
        <input type="text" placeholder="Type a keyword or phrase" aria-label="Search">
        <button aria-label="Find"><svg><use href="#bino"/></svg></button><button class="sign"><svg><use href="#user"/></svg>Sign In</button>
        <button class="dd" aria-label="Account"><svg class="t"><use href="#tri"/></svg></button><button aria-label="Exchange"><svg><use href="#exch"/></svg></button><button aria-label="Connect"><svg><use href="#conn"/></svg></button><button class="dd" aria-label="More"><svg class="t"><use href="#tri"/></svg></button><i class="vs"></i><button aria-label="Help"><svg><use href="#qm"/></svg></button><button class="dd" aria-label="Help list"><svg class="t"><use href="#tri"/></svg></button>
        <div class="wc"><button aria-label="Minimize"><svg><use href="#wmin"/></svg></button><button aria-label="Restore"><svg><use href="#wres"/></svg></button><button aria-label="Close"><svg><use href="#wclose"/></svg></button></div>
      </div>
    </div>
    <nav class="mrow"><button>File</button><button>Edit</button><button>View</button><button>Insert</button><button>Format</button><button>Tools</button><button>Draw</button><button>Dimension</button><button>Modify</button><button>Parametric</button><button>Window</button><button>Help</button><button>Express</button>
      <div class="wc"><button aria-label="Minimize drawing"><svg><use href="#wmin"/></svg></button><button aria-label="Restore drawing"><svg><use href="#wres"/></svg></button><button aria-label="Close drawing"><svg><use href="#wclose"/></svg></button></div>
    </nav>
  </div>
</header>

<div class="ftabs"><div class="ftab"><button>Drawing1*</button><button class="fx" aria-label="Close tab"><svg class="t" viewBox="0 0 8 8"><path d="m1 1 6 6M7 1 1 7" stroke="#777" stroke-width="2"/></svg></button></div><button class="fplus" aria-label="New tab">+</button></div>

<div class="bars">
  <div class="bar"><i class="grip"></i><button aria-label="New"><svg><use href="#new"/></svg></button><button aria-label="Open"><svg><use href="#open"/></svg></button><button aria-label="Save"><svg><use href="#save"/></svg></button><i class="sep"></i><button aria-label="Plot"><svg><use href="#print"/></svg></button><button aria-label="Preview"><svg><use href="#preview"/></svg></button><button aria-label="Publish"><svg><use href="#publish"/></svg></button><button aria-label="3D DWF"><svg><use href="#globe"/></svg></button><i class="sep"></i><button aria-label="Cut"><svg><use href="#cut"/></svg></button><button aria-label="Copy"><svg><use href="#copy"/></svg></button><button aria-label="Paste"><svg><use href="#paste"/></svg></button><button aria-label="Match"><svg><use href="#match"/></svg></button><button aria-label="Block editor"><svg><use href="#block"/></svg></button><i class="sep"></i><button aria-label="Undo"><svg><use href="#undo"/></svg></button><button class="dd" aria-label="Undo list"><svg class="t"><use href="#tri"/></svg></button><button aria-label="Redo"><svg><use href="#redo"/></svg></button><button class="dd" aria-label="Redo list"><svg class="t"><use href="#tri"/></svg></button><i class="sep"></i><button aria-label="Pan"><svg><use href="#pan"/></svg></button><button aria-label="Zoom"><svg><use href="#zoomrt"/></svg></button><button aria-label="Zoom window"><svg><use href="#zoomw"/></svg></button><button aria-label="Zoom previous"><svg><use href="#zoomp"/></svg></button><i class="sep"></i><button aria-label="Properties"><svg><use href="#props"/></svg></button><button aria-label="Design center"><svg><use href="#dcenter"/></svg></button><button aria-label="Palettes"><svg><use href="#palette"/></svg></button><button aria-label="Sheet set"><svg><use href="#sheet"/></svg></button><button aria-label="Markup"><svg><use href="#markup"/></svg></button><button aria-label="Calculator"><svg><use href="#calc"/></svg></button><i class="sep"></i><button aria-label="Help"><svg><use href="#help"/></svg></button></div>
  <div class="bar"><i class="grip"></i><span class="combo w175"><select aria-label="Workspace"><option>AutoCAD Classic</option></select><i class="arr"><svg><use href="#down"/></svg></i></span><button aria-label="Settings"><svg><use href="#gear"/></svg></button><button aria-label="My workspace"><svg><use href="#wsp"/></svg></button></div>
  <div class="bar"><i class="grip"></i><button aria-label="Layer properties"><svg><use href="#layerp"/></svg></button><span class="combo w298"><svg><use href="#bulb"/></svg><svg><use href="#sun"/></svg><svg><use href="#vpf"/></svg><svg><use href="#lock"/></svg><i class="sq"></i><select aria-label="Layer"><option>0</option></select><i class="arr"><svg><use href="#down"/></svg></i></span><button aria-label="Make current"><svg><use href="#layer2"/></svg></button><button aria-label="Layer previous"><svg><use href="#layer3"/></svg></button><button aria-label="Layer states"><svg><use href="#layerp"/></svg></button></div>
  <div class="bar"><i class="grip"></i><span class="combo w149"><i class="sq"></i><select aria-label="Color"><option>ByLayer</option></select><i class="arr"><svg><use href="#down"/></svg></i></span><i class="sep"></i><span class="combo w160"><i class="ln l60"></i><select aria-label="Linetype"><option>ByLayer</option></select><i class="arr"><svg><use href="#down"/></svg></i></span><i class="sep"></i><span class="combo w125"><i class="ln l36"></i><select aria-label="Lineweight"><option>ByLayer</option></select><i class="arr"><svg><use href="#down"/></svg></i></span><i class="sep"></i><span class="combo w119 off"><select aria-label="Plot style" disabled><option>ByColor</option></select><i class="arr"><svg><use href="#down"/></svg></i></span></div>
</div>

<main class="main">
  <aside class="dock"><div class="vbar"><i class="hgrip"></i><button aria-label="Line"><svg><use href="#line"/></svg></button><button aria-label="Construction line"><svg><use href="#xline"/></svg></button><button aria-label="Polyline"><svg><use href="#pline"/></svg></button><button aria-label="Polygon"><svg><use href="#poly"/></svg></button><button aria-label="Rectangle"><svg><use href="#rect"/></svg></button><button aria-label="Arc"><svg><use href="#arc"/></svg></button><button aria-label="Circle"><svg><use href="#circle"/></svg></button><button aria-label="Revision cloud"><svg><use href="#cloud"/></svg></button><button aria-label="Spline"><svg><use href="#spline"/></svg></button><button aria-label="Ellipse"><svg><use href="#ellipse"/></svg></button><button aria-label="Ellipse arc"><svg><use href="#earc"/></svg></button><button aria-label="Insert block"><svg><use href="#insert"/></svg></button><button aria-label="Make block"><svg><use href="#mkblock"/></svg></button><button aria-label="Point"><svg><use href="#point"/></svg></button><button aria-label="Hatch"><svg><use href="#hatch"/></svg></button><button aria-label="Gradient"><svg><use href="#grad"/></svg></button><button aria-label="Region"><svg><use href="#region"/></svg></button><button aria-label="Table"><svg><use href="#table"/></svg></button><button class="big">A</button><button aria-label="Add selected"><svg><use href="#addsel"/></svg></button></div></aside>

  <section class="center">
    <div class="view">
      <div class="canvas">
        <svg class="dwg">
          <defs>
            <pattern id="minor" x="17" y="27" width="68.440" height="68.440" patternUnits="userSpaceOnUse"><path d="M.5 0v69M0 .5h69" stroke="#272e38"/></pattern>
            <pattern id="major" x="85" y="203" width="342.200" height="342.200" patternUnits="userSpaceOnUse"><path d="M.5 0v343M0 .5h343" stroke="#343b4b"/></pattern>
          </defs>
          <g transform="translate(-31 -108)">
            <rect x="31" y="108" width="100%" height="100%" fill="url(#minor)"/><rect x="31" y="108" width="100%" height="100%" fill="url(#major)"/>
            <g class="ax">
              <path d="M323.500 734v105M79 839.500h363M113.500 839v-17H148M323.500 907v75"/>
              <path d="M52.500 910v50H103M48.500 955.500h9v9h-9z"/>
              <path d="M31 199.500h8M31 283.500h8M36.500 283v-16M31 392.500h8M31 471.500h8M340 283.500h50M340 471.500h50M340 657.500h50"/>
              <path d="M863.500 108v46M756 151.500h271M791.500 151v-17h28M863.500 834v101M729 935.500h288M763.500 935v-18h30"/>
              <path d="M1336.500 108v46M1366 211.500h109M1366 395.500h96M1366 580.500h121M1366 773.500h145M1336.500 841v127M1204 968.500h253M1238.500 968v-17h30"/>
              <path d="M1783 292.500h90M1817.500 292v-17h30M1776 511.500h100M1810.500 511v-17h30M1767 733.500h110M1802.500 733v-17h29M1759 958.500h115M1794.500 958v-17h29"/>
            </g>
            <g class="mg">
              <path d="m233 766 14 2 41 3 77 4 1-4M235 944l1 4 128 9 3-4M340 207l23 2 12 4M340 401h25M340 588l26 1"/>
              <path d="m779 844 28 20 97 7 2-3 28-19M1291 143l85 6 18-13M1367 329h9l7-6M1367 520h9M1280 886l17 12 79 5 7-5"/>
              <path d="m1858 195 11 8M1851 405l18 13M1842 624l27 19M1835 848l34 23"/>
            </g>
            <g class="or"><path d="m241 760 8 1 108 7 7 3M241 942l116 7M340 201l18 2M340 393l18 2M340 582l15 1 4 2M810 858l88 6 4 3M1300 139l72 6M1303 893l69 4M1367 322h8M1367 511h8M1367 700h6"/></g>
            <g class="cy"><path d="m240 762 120 10 6-1M258 945l102 7M340 204h18l17 9M340 396h18l8 5M340 585l26 1M779 844l28 17 4-1 94 7M1297 141l78 6M1300 895l72 5 5 2M1367 325h9M1367 514h8"/></g>
            <g class="gn">
              <path d="m158 764 72-1 15 4 22 2h93l30 1M158 947l14-4 63 1 23 1 20 4 72 1 43 2 51 1M340 211l50 1M340 400h50M340 586h50"/>
              <path d="m760 842 23 1 17-4 36 3 9 4 20-4 76 5 76 5M1212 135l120 5 28-2 18-5 46 3 11 4 20-3M1367 321l18 1 25-5 40 1 12 4M1367 513l23-2 23 2 22-6h20M1367 700l23 2 45 2 20-5M1204 876l50 4 26 6 67 6 53 7 57 6"/>
              <path d="m1783 185 50 7 36 5M1776 395l45 5 48 8M1767 613l50 6 52 10M1759 835l60 9 50 9"/>
            </g>
            <g class="yl">
              <path d="m158 766 72-2 15 4 22 3h93l30 1M158 949l14-4 63 0 23 1 20 5 72 1 43 2 51 0M340 213h50M340 402h50M340 588h50"/>
              <path d="m735 844 48 0 17-3 36 3 9 3 20-1 76 3 76 4M1212 137l120 5 28-3 18-4 46 3 11 4 20-3M1367 323l18 0 25-5 40 1 12 4M1367 515l23-3 23 2 22-6h20M1367 702l23 2 45 2 20-5M1204 877l50 5 26 5 67 6 53 7 57 6"/>
              <path d="m1783 187 50 6 36 6M1776 396l45 6 48 8M1767 615l50 6 52 9M1759 837l60 8 50 10"/>
            </g>
            <g class="wh">
              <path d="m79 767 18-1 49-2 6-2h60l21 4 17 1 100 3h18l22-3M97 949l33-1 38-2 7-3h55l27 1 10 4 23 1h60l57-1M340 209h50M340 398h50M340 585h50"/>
              <path d="m729 844 54-2 13-3 40 3 9 4 18-2h18l60 3 76 5M1330 140l30-2 18-4 46 2 11 4 20-3h20M1366 325l19-2 25-5 40 1 12 3M1366 518l24-3 23-1 22-6 20-1 25 1 7 4M1367 704l23-1 45 2 20-5 10-2h35l11 5M1247 881l33 5 9 4 49 7 41 5 6-3 45 2"/>
              <path d="m1820 192 26 3 23 3M1810 398l41 6 18 4M1809 617l33 6 27 6M1798 838l30 5 41 9"/>
            </g>
            <g class="pk"><text x="278" y="855">P.K. 3050.000</text><text x="342" y="299">.000</text><text x="342" y="488">.000</text><text x="342" y="674">.000</text><text x="818" y="951">P.K. 3190.000</text><text x="1290" y="985">P.K. 3320.000</text><text x="1365" y="228">00</text><text x="1365" y="412">00</text><text x="1365" y="597">00</text><text x="1365" y="790">00</text></g>
            <g class="el"><text x="117" y="819">104.00</text><text x="792" y="132">99.00</text><text x="766" y="915">98.00</text><text x="1241" y="949">93.00</text><text x="1820" y="272">90.00</text><text x="1813" y="491">89.00</text><text x="1804" y="713">89.00</text><text x="1796" y="938">89.00</text></g>
            <g class="ct">
              <text x="477" y="918">Cota Tierras=113.275</text><text x="477" y="929">Cota certificación01=114.002</text><text x="477" y="939">V.Desmonte= 102.383</text><text x="477" y="949">V.Terraplén= 0.000</text>
              <text x="1050" y="837">V.Desmonte= 528.588</text><text x="1050" y="847">V.Terraplén= 0.000</text>
              <text x="1508" y="110">Cota Tierras=104.116</text><text x="1508" y="120">Cota certificación01=105.633</text><text x="1508" y="130">V.Desmonte= 248.897</text><text x="1508" y="141">V.Terraplén= 0.000</text>
              <text x="1495" y="290">Cota Tierras=104.043</text><text x="1495" y="301">Cota certificación01=104.352</text><text x="1495" y="311">V.Desmonte= 119.821</text><text x="1495" y="321">V.Terraplén= 0.000</text>
              <text x="1522" y="475">Cota Tierras=103.671</text><text x="1522" y="485">Cota certificación01=103.367</text><text x="1522" y="495">V.Desmonte= 28.178</text><text x="1522" y="505">V.Terraplén= 17.620</text>
              <text x="1544" y="659">Cota Tierras=103.298</text><text x="1544" y="670">Cota certificación01=103.430</text><text x="1544" y="680">V.Desmonte= 10.424</text><text x="1544" y="690">V.Terraplén= 18.370</text>
              <text x="1491" y="853">Cota Tierras=102.926</text><text x="1491" y="863">Cota certificación01=103.495</text><text x="1491" y="873">V.Desmonte= 48.144</text><text x="1491" y="883">V.Terraplén= 1.997</text>
            </g>
            <g class="ucs"><text x="54" y="905">Y</text><text x="107" y="959">X</text></g>
            <g class="vlabel"><text x="35" y="125">[−][Top][2D Wireframe]</text></g>
            <circle cx="1787" cy="190" r="54" fill="none" stroke="#59606a" stroke-opacity=".6" stroke-width="12"/>
            <rect x="1760" y="164" width="52" height="52" fill="#c4c4c4" fill-opacity=".88"/><rect x="1770" y="174" width="32" height="32" fill="#a2a7b0" fill-opacity=".6"/>
            <g class="nav"><text x="1786" y="141">N</text><text x="1786" y="253">S</text><text x="1730" y="197">W</text><text x="1842" y="197">E</text></g><text class="topt" x="1786" y="194">TOP</text>
            <path d="M1066.500 131.500v16l4-4 3 6 2-1-3-6h5z" fill="#fff" stroke="#000"/>
          </g>
        </svg>
        <button class="wcs">WCS <svg class="t" viewBox="0 0 8 8"><path d="M1 2.500h6L4 6z" fill="#a8acb6"/></svg></button>

        <section class="win inactive protopo">
          <div class="title"><svg class="wi"><use href="#logo"/></svg><h2>Protopo v6.1</h2><button aria-label="Minimize"><svg viewBox="0 0 20 20"><path d="M5 13h7v3H5z" fill="#fff"/></svg></button><button aria-label="Maximize"><svg viewBox="0 0 20 20"><path d="M5 5.500h10v9H5zM5 6.500h10" fill="none" stroke="#fff" stroke-width="1.500"/></svg></button><button class="x" aria-label="Close"><svg viewBox="0 0 20 20"><path d="m5 5 10 10M15 5 5 15" stroke="#fff" stroke-width="2"/></svg></button></div>
          <div class="client pcl">
            <nav class="wmenu pm"><button>Archivo</button><button>Opciones</button><button>Programas</button><button>Util</button><button>Ayuda</button></nav>
            <div class="ptop">
              <div class="pleft">
                <div class="ptools"><button aria-label="Tree"><svg><use href="#tree1"/></svg></button><button aria-label="Tree 2"><svg><use href="#tree1"/></svg></button><i></i><button aria-label="XYZ"><svg><use href="#xyz"/></svg></button><button aria-label="Terrain"><svg><use href="#terr"/></svg></button><button aria-label="Profile"><svg><use href="#prof"/></svg></button><button aria-label="Points"><svg><use href="#dots"/></svg></button><button aria-label="v6"><svg><use href="#v6"/></svg></button><button aria-label="Blocks"><svg><use href="#flower"/></svg></button><button aria-label="Signal"><svg><use href="#wave"/></svg></button><button aria-label="Section"><svg><use href="#green"/></svg></button></div>
                <div class="ptabs"><button class="on">Principal</button><button>Cálculos</button><button>Utilidades</button></div>
              </div>
              <div class="pspin"><button class="b" aria-label="Up"><svg viewBox="0 0 16 16"><path d="M2 11h12L8 5z" fill="#00f"/></svg></button><button class="m">..</button><button class="b" aria-label="Down"><svg viewBox="0 0 16 16"><path d="M2 5h12l-6 6z" fill="#00f"/></svg></button></div>
            </div>
            <div class="ptree">
              <ul class="tree bold">
                <li><i class="g n"></i><button class="ex">−</button>D:\Trabajos\414 Gestopo JL Diaz Cantizano\1</li>
                <li><i class="g e"></i><i class="g"></i><button class="ex">+</button>Dibujos</li>
                <li><i class="g e"></i><i class="g"></i>Poligonales</li>
                <li><i class="g e"></i><i class="g"></i>Radiaciones</li>
                <li><i class="g e"></i><i class="g"></i>Coordenadas</li>
                <li><i class="g e"></i><i class="g"></i><button class="ex">+</button>M.D.T.</li>
                <li><i class="g e"></i><i class="g"></i><button class="ex">+</button>Longitudinales</li>
                <li><i class="g e"></i><i class="g"></i><button class="ex">+</button>Planta</li>
                <li><i class="g e"></i><i class="g"></i><button class="ex">+</button>Transversales</li>
                <li><i class="g e"></i><i class="g"></i>Bloques</li>
                <li><i class="g e"></i><i class="g"></i>Volúmenes</li>
                <li><i class="g e"></i><i class="g"></i>Sección tipo</li>
                <li><i class="g e"></i><i class="g last"></i><button class="ex">+</button>ASCII</li>
              </ul>
              <div class="sbh"><button class="sb" aria-label="Left"><svg><use href="#down"/></svg></button><i class="th w181"></i><button class="sb r" aria-label="Right"><svg><use href="#down"/></svg></button></div>
            </div>
            <textarea class="pout" aria-label="Salida"></textarea>
          </div>
        </section>

        <section class="win trans">
          <div class="title"><svg class="wi"><use href="#logo"/></svg><h2>Transversales - [D:\Trabajos\Demo\Modificado01ejesur.trn]</h2><button aria-label="Minimize"><svg viewBox="0 0 20 20"><path d="M5 13h7v3H5z" fill="#fff"/></svg></button><button aria-label="Maximize"><svg viewBox="0 0 20 20"><path d="M5 5.500h10v9H5zM5 6.500h10" fill="none" stroke="#fff" stroke-width="1.500"/></svg></button><button class="x" aria-label="Close"><svg viewBox="0 0 20 20"><path d="m5 5 10 10M15 5 5 15" stroke="#fff" stroke-width="2"/></svg></button></div>
          <div class="client">
            <nav class="wmenu"><button>Archivo</button><button>Edición</button><button>Marcar</button><button>Dibujar</button><button>Aplicaciones</button><button>Configurar</button><button>Ayuda</button></nav>
            <div class="ttools">
              <button aria-label="Nuevo"><svg><use href="#pnew"/></svg></button><button aria-label="Abrir"><svg><use href="#popen"/></svg></button><button aria-label="Guardar"><svg><use href="#psave"/></svg></button><button aria-label="Imprimir"><svg><use href="#pprint"/></svg></button><button aria-label="Importar"><svg><use href="#pin"/></svg></button><button aria-label="Exportar"><svg><use href="#pout"/></svg></button><i></i><button aria-label="Cortar"><svg><use href="#pcut"/></svg></button><button aria-label="Copiar"><svg><use href="#pcopy"/></svg></button><button aria-label="Pegar"><svg><use href="#ppaste"/></svg></button><button aria-label="Pegar fin"><svg><use href="#ppaste"/></svg></button><i></i><button class="l" aria-label="Borrar vértices"><svg><use href="#pscis"/></svg></button><button class="l" aria-label="Hoja"><svg><use href="#psheet"/></svg></button><button class="l" aria-label="Trama"><svg><use href="#phatch"/></svg></button><i></i><button class="l" aria-label="Exportar perfil"><svg><use href="#pexp"/></svg></button><button class="l" aria-label="Importar perfil"><svg><use href="#pexp"/></svg></button>
              <output class="coord">1.535, 66.466</output>
            </div>
            <div class="tbody">
              <div class="tleft">
                <div class="xtabs"><button class="w44">Config.</button><button class="on w50">Transv.</button><button class="vol">Vol.</button><button>Bloqs.</button></div>
                <div class="xpane">
                  <div class="tbox">
                    <ul class="tree">
                      <li><i class="g v"></i><i class="g"></i><button class="ex">+</button><label><input type="checkbox" checked>3880.000 - Importado</label></li>
                      <li><i class="g v"></i><i class="g"></i><button class="ex">+</button><label><input type="checkbox" checked>3890.000 - Importado</label></li>
                      <li><i class="g v"></i><i class="g"></i><button class="ex">+</button><label><input type="checkbox" checked>3900.000 - Importado</label></li>
                      <li><i class="g v"></i><i class="g"></i><button class="ex">+</button><label><input type="checkbox" checked>3910.000 - Importado</label></li>
                      <li><i class="g v"></i><i class="g"></i><button class="ex">+</button><label><input type="checkbox" checked>3920.000 - Importado</label></li>
                      <li><i class="g v"></i><i class="g"></i><button class="ex">+</button><label><input type="checkbox" checked>3930.000 - Importado</label></li>
                      <li><i class="g v"></i><i class="g"></i><button class="ex">+</button><label><input type="checkbox" checked>3940.000 - Importado</label></li>
                      <li><i class="g v"></i><i class="g"></i><button class="ex">+</button><label><input type="checkbox" checked>3950.000 - Importado</label></li>
                      <li><i class="g v"></i><i class="g"></i><button class="ex">+</button><label><input type="checkbox" checked>3960.000 - Importado</label></li>
                      <li><i class="g v"></i><i class="g"></i><button class="ex">−</button><label><input type="checkbox" checked>3970.000 - Importado</label></li>
                      <li><i class="g v"></i><i class="g v"></i><i class="g"></i><label><input type="checkbox" checked>Proyecto</label></li>
                      <li><i class="g v"></i><i class="g v"></i><i class="g"></i><label><input type="checkbox" checked>Terreno</label></li>
                      <li><i class="g v"></i><i class="g v"></i><i class="g"></i><label><input type="checkbox" checked>Tierra vegetal</label></li>
                      <li><i class="g v"></i><i class="g v"></i><i class="g"></i><label><input type="checkbox" checked><mark>Zahorra</mark></label></li>
                      <li><i class="g v"></i><i class="g v"></i><i class="g"></i><label><input type="checkbox" checked>Tierras</label></li>
                      <li><i class="g v"></i><i class="g v"></i><i class="g"></i><label><input type="checkbox" checked>Rodadura</label></li>
                      <li><i class="g v"></i><i class="g v"></i><i class="g"></i><label><input type="checkbox" checked>Firme</label></li>
                      <li><i class="g v"></i><i class="g v"></i><i class="g last"></i><label><input type="checkbox" checked>Certificacion01</label></li>
                      <li><i class="g v"></i><i class="g"></i><button class="ex">+</button><label><input type="checkbox" checked>3980.000 - Importado</label></li>
                      <li><i class="g v"></i><i class="g"></i><button class="ex">+</button><label><input type="checkbox" checked>3990.000 - Importado</label></li>
                      <li><i class="g v"></i><i class="g"></i><button class="ex">+</button><label><input type="checkbox" checked>4000.000 - Importado</label></li>
                      <li><i class="g v"></i><i class="g"></i><button class="ex">+</button><label><input type="checkbox" checked>4010.000 - Importado</label></li>
                      <li><i class="g v"></i><i class="g"></i><button class="ex">+</button><label><input type="checkbox" checked>4020.000 - Importado</label></li>
                      <li><i class="g v"></i><i class="g"></i><button class="ex">+</button><label><input type="checkbox" checked>4030.000 - Importado</label></li>
                      <li><i class="g v"></i><i class="g"></i><button class="ex">+</button><label><input type="checkbox" checked>4040.000 - Importado</label></li>
                      <li><i class="g v"></i><i class="g"></i><button class="ex">+</button><label><input type="checkbox" checked>4050.000 - Importado</label></li>
                      <li><i class="g v"></i><i class="g"></i><button class="ex">+</button><label><input type="checkbox" checked>4060.000 - Importado</label></li>
                      <li><i class="g v"></i><i class="g"></i><button class="ex">+</button><label><input type="checkbox" checked>4070.000 - Importado</label></li>
                      <li><i class="g v"></i><i class="g last"></i><button class="ex">+</button><label><input type="checkbox" checked>4072.251 - Importado</label></li>
                      <li class="b"><i class="g last"></i><button class="ex">−</button><svg class="i"><use href="#grid"/></svg>Lista de PKs</li>
                      <li><i class="g e"></i><i class="g"></i><svg class="ls"><use href="#list"/></svg>Todos</li>
                      <li><i class="g e"></i><i class="g"></i><svg class="ls"><use href="#list"/></svg>3560-3760</li>
                      <li><i class="g e"></i><i class="g last"></i><svg class="ls"><use href="#list"/></svg>Otro Todos</li>
                    </ul>
                    <div class="sbv"><button class="sb u" aria-label="Up"><svg><use href="#down"/></svg></button><i class="th"></i><button class="sb d" aria-label="Down"><svg><use href="#down"/></svg></button></div>
                    <div class="sbh"><button class="sb" aria-label="Left"><svg><use href="#down"/></svg></button><i class="th w79"></i><button class="sb r" aria-label="Right"><svg><use href="#down"/></svg></button></div><i class="corner"></i>
                  </div>
                </div>
              </div>
              <div class="slide"><input type="range" min="0" max="100" value="97" aria-label="Escala vertical"></div>
              <div class="tright">
                <div class="graph"><b>V: 4.3</b><b class="pkv">P.K. 3970.000</b>
                  <svg viewBox="0 0 741 108" preserveAspectRatio="none"><path d="M5 106h732" stroke="#fff" stroke-width="2"/><path d="M370.500 6v100" stroke="#fff" stroke-dasharray="13 6 2 5"/><path d="m6 14 34.500 90L68.500 32 370.500 6l302 26 28 72 8-23" fill="none" stroke="#0ff" shape-rendering="crispEdges"/></svg>
                </div>
                <div class="xtabs"><button class="on w50">Vértices</button><button class="w74">Transversales</button></div>
                <div class="xpane rp"><div class="gridbox">
                  <table>
                    <colgroup><col class="c50"><col class="c60"><col class="c60"><col class="c70"><col class="c60"><col class="c40"><col class="c100"><col class="c50"><col class="c100"><col class="c50"></colgroup>
                    <thead><tr><th>0/8</th><th>Dist.</th><th>Cota</th><th>Pendiente</th><th>C.Roja</th><th>Ver</th><th>Sección tipo</th><th>Tipo</th><th>Código</th><th>Orden</th></tr></thead>
                    <tbody>
                      <tr><th>1</th><td class="sel">-6.524</td><td>66.425</td><td>0.000000</td><td></td><td class="ck"><input type="checkbox" checked aria-label="Ver 1"></td><td class="st"><span class="cs"><select aria-label="Sección 1"><option>0 &nbsp;Sin código</option></select><i class="arr"><svg><use href="#down"/></svg></i></span></td><td>0</td><td><a href="#">Sin código</a></td><td>2</td></tr>
                      <tr><th>2</th><td>-6.397</td><td>66.341</td><td>-66.666667</td><td></td><td class="ck"><input type="checkbox" checked aria-label="Ver 2"></td><td class="st"><span class="cs"><select aria-label="Sección 2"><option>1 &nbsp;Talud</option></select><i class="arr"><svg><use href="#down"/></svg></i></span></td><td>1</td><td><a href="#">Sin código</a></td><td>2</td></tr>
                      <tr><th>3</th><td>-5.897</td><td>66.041</td><td>-60.000000</td><td></td><td class="ck"><input type="checkbox" checked aria-label="Ver 3"></td><td class="st"><span class="cs"><select aria-label="Sección 3"><option>0 &nbsp;Sin código</option></select><i class="arr"><svg><use href="#down"/></svg></i></span></td><td>0</td><td><a href="#">Sin código</a></td><td>0</td></tr>
                      <tr><th>4</th><td>-5.397</td><td>66.341</td><td>60.000000</td><td></td><td class="ck"><input type="checkbox" checked aria-label="Ver 4"></td><td class="st"><span class="cs"><select aria-label="Sección 4"><option>0 &nbsp;Sin código</option></select><i class="arr"><svg><use href="#down"/></svg></i></span></td><td>0</td><td><a href="#">Sin código</a></td><td>0</td></tr>
                      <tr><th>5</th><td>-0.000</td><td>66.449</td><td>2.001112</td><td></td><td class="ck"><input type="checkbox" checked aria-label="Ver 5"></td><td class="st"><span class="cs"><select aria-label="Sección 5"><option>0 &nbsp;Sin código</option></select><i class="arr"><svg><use href="#down"/></svg></i></span></td><td>0</td><td><a href="#">Sin código</a></td><td>0</td></tr>
                      <tr><th>6</th><td>5.397</td><td>66.341</td><td>-2.001112</td><td></td><td class="ck"><input type="checkbox" checked aria-label="Ver 6"></td><td class="st"><span class="cs"><select aria-label="Sección 6"><option>0 &nbsp;Sin código</option></select><i class="arr"><svg><use href="#down"/></svg></i></span></td><td>0</td><td><a href="#">Sin código</a></td><td>0</td></tr>
                      <tr><th>7</th><td>5.897</td><td>66.041</td><td>-60.000000</td><td></td><td class="ck"><input type="checkbox" checked aria-label="Ver 7"></td><td class="st"><span class="cs"><select aria-label="Sección 7"><option>1 &nbsp;Talud</option></select><i class="arr"><svg><use href="#down"/></svg></i></span></td><td>1</td><td><a href="#">Sin código</a></td><td>7</td></tr>
                      <tr><th>8</th><td>6.049</td><td>66.142</td><td>66.666667</td><td></td><td class="ck"><input type="checkbox" checked aria-label="Ver 8"></td><td class="st"><span class="cs"><select aria-label="Sección 8"><option>0 &nbsp;Sin código</option></select><i class="arr"><svg><use href="#down"/></svg></i></span></td><td>0</td><td><a href="#">Sin código</a></td><td>7</td></tr>
                    </tbody>
                  </table>
                </div></div>
              </div>
            </div>
          </div>
        </section>
      </div>
      <div class="sbv main-sb"><button class="sb u" aria-label="Scroll up"><svg><use href="#down"/></svg></button><i class="mth"></i><button class="sb d" aria-label="Scroll down"><svg><use href="#down"/></svg></button></div>
    </div>
    <div class="lrow">
      <div class="lnav"><button aria-label="First"><svg viewBox="0 0 16 16"><path d="M4 2v12M13 2v12L6 8z" fill="#a8a594" stroke="#a8a594"/></svg></button><button aria-label="Previous"><svg viewBox="0 0 16 16"><path d="M11 2v12L4 8z" fill="#a8a594"/></svg></button><button aria-label="Next"><svg viewBox="0 0 16 16"><path d="M5 2v12l7-6z" fill="#a8a594"/></svg></button><button aria-label="Last"><svg viewBox="0 0 16 16"><path d="M12 2v12M3 2v12l7-6z" fill="#a8a594" stroke="#a8a594"/></svg></button></div>
      <button class="ltab on">Model</button><button class="ltab">Layout1</button><button class="ltab">Layout2</button>
      <div class="sbh hmain"><button class="sb" aria-label="Scroll left"><svg><use href="#down"/></svg></button><i class="mth h"></i><button class="sb r" aria-label="Scroll right"><svg><use href="#down"/></svg></button></div>
    </div>
  </section>

  <aside class="dock rd"><div class="vbar"><i class="hgrip"></i><button aria-label="Erase"><svg><use href="#erase"/></svg></button><button aria-label="Copy"><svg><use href="#copyo"/></svg></button><button aria-label="Mirror"><svg><use href="#mirror"/></svg></button><button aria-label="Offset"><svg><use href="#offset"/></svg></button><button aria-label="Array"><svg><use href="#array"/></svg></button><button aria-label="Move"><svg><use href="#move"/></svg></button><button aria-label="Rotate"><svg><use href="#rotate"/></svg></button><button aria-label="Scale"><svg><use href="#scale"/></svg></button><button aria-label="Stretch"><svg><use href="#stretch"/></svg></button><button aria-label="Trim"><svg><use href="#trim"/></svg></button><button aria-label="Extend"><svg><use href="#extend"/></svg></button><button aria-label="Break at point"><svg><use href="#breakp"/></svg></button><button aria-label="Break"><svg><use href="#break"/></svg></button><button aria-label="Join"><svg><use href="#join"/></svg></button><button aria-label="Chamfer"><svg><use href="#chamfer"/></svg></button><button aria-label="Fillet"><svg><use href="#fillet"/></svg></button><button aria-label="Blend"><svg><use href="#blend"/></svg></button><button aria-label="Explode"><svg><use href="#explode"/></svg></button></div>
  <div class="vbar"><i class="hgrip"></i><button aria-label="Bring to front"><svg><use href="#front"/></svg></button><button aria-label="Send to back"><svg><use href="#back"/></svg></button><button aria-label="Bring above"><svg><use href="#above"/></svg></button><button aria-label="Send under"><svg><use href="#under"/></svg></button><i class="hsep"></i><button aria-label="Annotations to front"><svg><use href="#abc"/></svg></button><button aria-label="Hatches to back"><svg><use href="#hback"/></svg></button></div></aside>
</main>

<section class="cmd">
  <div class="cgrip"><i></i><button aria-label="Close command line"><svg class="c" viewBox="0 0 16 16"><path d="m3 3 10 10M13 3 3 13" stroke="#fff" stroke-width="3"/></svg></button><button aria-label="Customize"><svg class="c" viewBox="0 0 16 16"><path d="M14 14 7 7" stroke="#fff" stroke-width="3"/><path d="M7 2v4H2" fill="none" stroke="#fff" stroke-width="3"/></svg></button></div>
  <div class="clines"><p>[All/Center/Dynamic/Extents/Previous/Scale/Window/Object] &lt;real time&gt;: _e Regenerating model.</p>
    <div class="cin"><button aria-label="Recent commands"><svg viewBox="0 0 16 16"><path d="M.5 .5h15v15H.5z" fill="#dfe8f2" stroke="#9ab"/><path d="m3 4 4 3-4 3M8 12h5" fill="none" stroke="#333" stroke-width="1.500"/></svg></button><svg class="t"><use href="#tri"/></svg><input type="text" placeholder="Type a command" aria-label="Command"></div></div>
  <div class="ctools"><button aria-label="Abrir"><svg><use href="#popen"/></svg></button><button aria-label="Guardar"><svg><use href="#psave"/></svg></button><i></i><button aria-label="Texto"><svg><use href="#pA"/></svg></button><button class="dd" aria-label="Más"><svg class="t"><use href="#tri"/></svg></button><button aria-label="Punto"><svg><use href="#pcross"/></svg></button><button class="dd" aria-label="Más"><svg class="t"><use href="#tri"/></svg></button><button aria-label="Girar"><svg><use href="#prot"/></svg></button><i></i><button aria-label="Curva"><svg><use href="#pcurve"/></svg></button><button aria-label="Curva 2"><svg><use href="#pcurve"/></svg></button><button aria-label="Bloques"><svg><use href="#pblocks"/></svg></button><button class="dd" aria-label="Más"><svg class="t"><use href="#tri"/></svg></button><i></i><button aria-label="Vegetación"><svg><use href="#ptree"/></svg></button><button class="dd" aria-label="Más"><svg class="t"><use href="#tri"/></svg></button><button aria-label="Ayuda"><svg><use href="#pq"/></svg></button><button class="dd" aria-label="Más"><svg class="t"><use href="#tri"/></svg></button></div>
</section>

<footer class="status"><output>13771.9856, 9813.3329, 0.0000</output>
  <div class="sbtns"><button aria-label="Infer"><svg><use href="#s-snap"/></svg></button><button aria-label="Snap"><svg><use href="#s-dots"/></svg></button><button class="on" aria-label="Grid"><svg><use href="#s-grid"/></svg></button><button aria-label="Ortho"><svg><use href="#s-ortho"/></svg></button><button aria-label="Polar"><svg><use href="#s-polar"/></svg></button><button class="on" aria-label="Osnap"><svg><use href="#s-osnap"/></svg></button><button aria-label="3D osnap"><svg><use href="#s-3d"/></svg></button><button aria-label="Tracking"><svg><use href="#s-ang"/></svg></button><button aria-label="Dynamic UCS"><svg><use href="#s-ducs"/></svg></button><button aria-label="Dynamic input"><svg><use href="#s-dyn"/></svg></button><button aria-label="Lineweight"><svg><use href="#s-lwt"/></svg></button><button class="on" aria-label="Transparency"><svg><use href="#s-tpy"/></svg></button><button aria-label="Quick properties"><svg><use href="#s-qp"/></svg></button><button aria-label="Selection cycling"><svg><use href="#s-sc"/></svg></button><button aria-label="Annotation monitor"><svg><use href="#s-am"/></svg></button></div>
  <div class="sright"><button class="tx">MODEL</button><button aria-label="Layout"><svg><use href="#s-model"/></svg></button><button aria-label="Quick view"><svg><use href="#s-qv"/></svg></button><i></i><button class="tx"><svg><use href="#compass"/></svg>1:1<svg class="t"><use href="#tri"/></svg></button><button aria-label="Annotation visibility"><svg><use href="#compassy"/></svg></button><button aria-label="Auto scale"><svg><use href="#compassy"/></svg></button><i></i><button aria-label="Workspace"><svg><use href="#gear"/></svg></button><button aria-label="Lock"><svg><use href="#lock"/></svg></button><button aria-label="Hardware"><svg><use href="#rotate"/></svg></button><button class="lit" aria-label="Isolate"><svg><use href="#bulb"/></svg></button><button class="dd" aria-label="Menu"><svg class="t"><use href="#tri"/></svg></button><button aria-label="Clean screen"><svg viewBox="0 0 16 16"><path d="M1.500 2.500h13v11h-13zM1.500 4.500h13" fill="#fff" stroke="#333"/></svg></button></div>
</footer>
</body>
</html>
```
FILE: styles.css
```css
*{box-sizing:border-box}
html,body{margin:0;height:100%}
body{display:flex;flex-direction:column;background:#666;color:#000;font:11px/16px "Liberation Sans",sans-serif;overflow:hidden;min-height:0}
button,input,select,textarea,output{font:inherit;color:inherit}
button{background:none;border:0;padding:0;margin:0;display:flex;align-items:center;justify-content:center;flex:none;white-space:nowrap}
h1,h2,p,ul{margin:0;padding:0;font-weight:normal}
i{font-style:normal;display:block;flex:none}
svg{display:block;flex:none}
button svg{width:16px;height:16px}
.defs{position:absolute;width:0;height:0}
svg.t,button svg.t{width:8px;height:8px}
svg.i{width:16px;height:16px}
select{appearance:none;border:0;background:none;padding:0;margin:0;flex:1;min-width:0;outline:0;opacity:1}

/* application header */
.top{display:flex;flex:none;height:47px;background:linear-gradient(#b0b0b0,#8c8c8c 45%,#565656);border-bottom:1px solid #2e2e2e;color:#fff}
.app{width:41px;height:41px;margin-top:2px;border:1px solid #222;background:linear-gradient(#d8d8d8,#8a8a8a)}
.app svg.alogo{width:27px;height:28px}
.topcol{flex:1;display:flex;flex-direction:column;min-width:0}
.trow{display:flex;height:26px;align-items:center}
.trow h1{flex:1;text-align:center;font-size:13px;white-space:nowrap}
.qat{display:flex;align-items:center;padding-left:5px}
.qat button{width:24px;height:22px}
.qat button.dd{width:12px}
.qcombo{display:flex;align-items:center;gap:3px;width:180px;height:21px;margin:0 2px 0 3px;padding:0 4px 0 3px;border:1px solid #555;background:linear-gradient(#dcdcdc,#b4b4b4);color:#000}
.info{display:flex;align-items:center}
.info>svg.t{margin-right:3px}
.info input{width:180px;height:22px;border:1px solid #666;background:#f4f4f4;padding:0 4px;font-size:12px;font-style:italic;color:#555}
.info input::placeholder{color:#777;opacity:1}
.info button{width:24px;height:22px}
.info button.sign{width:86px;justify-content:flex-start;gap:5px;padding-left:4px}
.info button.dd{width:14px}
.info .sign+.dd{margin-left:18px}
.vs{width:1px;height:20px;background:#aaa;margin:0 4px 0 5px}
.wc{display:flex;margin-left:auto;padding-right:1px}
.wc button,.info .wc button{width:17px}
.info .wc{margin-left:14px}
.wc svg{width:12px;height:12px}
.mrow{display:flex;align-items:center;height:20px;padding-left:13px;gap:22px}
.mrow>button{font-size:14px}
.ftabs{display:flex;flex:none;height:27px;align-items:flex-end;padding:0 0 2px 17px;background:linear-gradient(#a2a2a2,#929292);border-bottom:1px solid #c0c0c0;gap:4px}
.ftab{display:flex;align-items:center;justify-content:space-between;width:130px;height:20px;padding:0 14px;background:linear-gradient(#dadada,#b8b8b8);border-radius:9px 9px 0 0}
.fplus{width:21px;height:16px;align-self:flex-end;background:#858585;border:1px solid #555;border-radius:3px 8px 3px 8px;color:#bbb;font-weight:bold;font-size:14px}

/* docked toolbars */
.bars{display:flex;flex:none;height:32px;padding:5px 0 4px 3px;gap:3px;background:#666}
.bar{display:flex;align-items:center;height:23px;background:#ebebeb;border:1px solid #3a3a3a;border-width:1px 1px 1px 0}
.bar button{width:23px;height:20px}
.bar button.dd{width:12px}
.grip{width:7px;height:21px;background:radial-gradient(circle at 1px 1px,#222 1px,transparent 1px) 0 0/3px 3px,#777}
.sep{width:6px;height:20px;border-left:1px solid #fff;background:linear-gradient(#c8c4b4,#c8c4b4) 2px 0/1px 100% no-repeat}
.combo{display:flex;align-items:center;height:21px;padding:1px 1px 1px 3px;border:1px solid #7f9db9;background:#fff;gap:1px}
.combo select{padding-left:5px}
.combo svg{width:15px;height:15px}
.w175{width:175px}.w298{width:298px}.w149{width:149px}.w160{width:160px}.w125{width:124px}.w119{width:119px}
.sq{width:10px;height:10px;border:1px solid #000;margin-left:3px}
.ln{height:1px;background:#000}.l60{width:60px}.l36{width:36px}
.arr{width:15px;height:17px;display:flex;align-items:center;justify-content:center;background:linear-gradient(135deg,#dce7fe,#b3c7f5);border-radius:2px}
.arr svg{width:15px;height:15px}
.off{background:#ece9d8;color:#aca899;border-color:#ccc}
.off .arr{background:#e6e3d4;opacity:.5}

/* main area */
.main{display:flex;flex:1;min-height:0}
.dock{width:30px;padding-left:1px;flex:none}
.vbar{width:24px;background:#ebebeb;border:1px solid #3a3a3a;border-top:0;padding-bottom:1px;margin-bottom:2px}
.rd{width:32px;padding-left:4px}
.hgrip{height:9px;margin:0 -1px;background:radial-gradient(circle at 1px 1px,#222 1px,transparent 1px) 4px 2px/3px 3px,#777}
.vbar button{width:22px;height:22px}
.vbar .big{font-size:20px;line-height:22px}
.hsep{height:1px;margin:3px;background:#aca899}
.center{flex:1;display:flex;flex-direction:column;min-width:0;border-left:1px solid #9a9684}
.view{flex:1;display:flex;min-height:0;border-top:2px solid #9a9684}
.canvas{position:relative;flex:1;min-width:0;overflow:hidden;background:#212830}
.dwg{width:100%;height:100%;position:absolute;left:0;top:0}
.dwg g{fill:none}
.dwg path{shape-rendering:crispEdges}
.ax,.wh{stroke:#fff}.mg{stroke:#f0f}.or{stroke:#d05a10;stroke-width:2}.cy{stroke:#0ff}.gn{stroke:#0f0}.yl{stroke:#ff0}
.dwg text{fill:#fff;stroke:none}
.pk text{font-size:14px}
.el text{font-size:10px}
.ct text{font:10px Lato,sans-serif}
.ucs text{font-size:18px}
.vlabel text{font-size:13px}
.dwg .nav text{font-size:19px;font-weight:bold;fill:#a6a8ab;text-anchor:middle}
.dwg .topt{font-size:11px;font-weight:bold;fill:#4a5058;text-anchor:middle}
.wcs{position:absolute;right:59px;top:169px;width:48px;height:18px;border:1px solid #9298a4;border-radius:3px;background:#7d8390;color:#c0c4cc;gap:4px}

/* XP windows */
.win{position:absolute;display:flex;flex-direction:column;border-radius:8px 8px 0 0;background:linear-gradient(90deg,#0831d9,#0f52e8 3px,#0f52e8 calc(100% - 3px),#001ea0);padding:0 4px 4px}
.title{display:flex;align-items:center;flex:none;height:30px;margin:0 -4px;padding:0 5px 0 6px;gap:2px;border-radius:8px 8px 0 0;background:linear-gradient(#0a53d8,#2f8bff 3px,#0460f0 8px,#0055e5 45%,#0066ff 85%,#0044c8)}
.title h2{flex:1;font-weight:bold;font-size:13px;line-height:18px;color:#fff;white-space:nowrap;padding-left:3px;text-shadow:1px 1px #0f1089}
.title .wi{width:16px;height:16px}
.title button{width:21px;height:21px;border:1px solid #fff;border-radius:3px;background:linear-gradient(135deg,#5c8cf0,#1c4bd0)}
.title button svg{width:19px;height:19px}
.title .x{background:linear-gradient(135deg,#f09878,#d83c10)}
.inactive{background:#6a76d6}
.inactive .title{background:linear-gradient(#7a92e4,#9db4f2 3px,#7d96e0 10px,#7e9ae6 70%,#8ba8f0)}
.inactive .title h2{color:#d8e4f8;text-shadow:none}
.inactive .title button{border-color:#b8c4f0;background:linear-gradient(135deg,#6080e8,#3355cc)}
.inactive .title .x{background:linear-gradient(135deg,#c08098,#b05070)}
.client{flex:1;display:flex;flex-direction:column;min-height:0;background:#ece9d8}
.wmenu{display:flex;flex:none;height:19px;padding:0 6px;gap:11px;border-bottom:1px solid #fff;align-items:center}
.wmenu button{height:15px}
.protopo{left:7px;top:26px;width:302px;height:600px}
.pm{color:#aca899;padding:0 3px}
.pm button{background:#fdfdfb}
.pcl{padding:0 3px 3px 2px}
.ptop{display:flex;gap:6px;margin-top:2px;padding-right:3px;flex:none}
.pleft{flex:1}
.ptools{display:flex;align-items:center;height:31px;border:1px solid #8ba0b8;background:#dedbc8;padding-left:8px}
.ptools button{width:23px}
.ptools i{width:7px}
.ptabs{display:flex;align-items:flex-end;height:22px;gap:3px}
.ptabs button{height:18px;width:50px;background:#aca899;color:#fff}
.ptabs button.on{height:22px;width:56px;margin-right:-3px;background:#fdfdfb;color:#00f}
.ptabs button:last-child{width:54px}
.pspin{width:17px;display:flex;flex-direction:column;gap:1px}
.pspin .b{height:21px;border:1px solid;border-color:#fff #000 #000 #fff;background:#d6d3c8}
.pspin .m{height:9px;border:1px solid #1c5180;border-radius:2px;background:#fff;font-weight:bold;line-height:5px}
.ptree{display:flex;flex-direction:column;flex:none;height:278px;margin-top:4px;border:1px solid #7f9db9;background:#ffffc0}
.ptree .tree{flex:1;padding:1px 0 0 4px}
.pout{flex:1;margin:5px 0 0;width:100%;resize:none;border:1px solid #000;outline:1px solid #fff;outline-offset:-3px;background:#ffffc0;box-shadow:inset 1px 1px #ece9d8,inset 2px 2px #716f64}
.tree{list-style:none;overflow:hidden}
.tree li{position:relative;display:flex;align-items:center;height:16px;white-space:nowrap}
.tree label{display:flex;align-items:center}
.bold,.tree li.b{font-weight:bold;font-size:12px}
.bold .g:last-of-type{margin-right:2px}
.g{width:19px;height:16px;background:repeating-linear-gradient(#aca899 0 1px,transparent 1px 2px) 9px 0/1px 100% no-repeat,repeating-linear-gradient(90deg,#aca899 0 1px,transparent 1px 2px) 9px 8px/9px 1px no-repeat}
.g.v{background-size:1px 100%,0 0}
.g.e,.g.n{background:none}
.g.last{background-size:1px 8px,9px 1px}
.ex{width:9px;height:9px;margin:0 5px 0 -14px;border:1px solid #7898b5;border-radius:1px;background:linear-gradient(135deg,#fff,#c8c2b0);font-weight:bold;font-size:9px;line-height:7px;color:#000}
.bold .ex{margin:0 7px 0 -16px}
.tree input,.ck input{appearance:none;position:relative;width:13px;height:13px;background:#fff}
.tree input{margin:0 7px 0 2px;border:2px solid #000}
.tree input::before,.ck input::before{content:"";position:absolute;left:1px;top:1px;width:7px;height:4px;border:solid #000;border-width:0 0 2px 2px;transform:rotate(-45deg)}
mark{background:#316ac5;color:#fff;padding:0 4px 0 2px;margin-left:-2px}
.tree svg.i{margin:0 5px 0 1px;height:15px}
.ls{width:10px;height:16px;margin:0 9px 0 3px}

/* scrollbars */
.sbh{display:flex;height:17px;background:#f6f5f0;align-items:center;flex:none}
.sbv{display:flex;flex-direction:column;width:17px;background:#f6f5f0;align-items:center;flex:none}
.sb{width:16px;height:16px;border:1px solid #fff;border-radius:2px;background:linear-gradient(135deg,#dce7fe,#b0c5f6)}
.sb svg{width:14px;height:14px;transform:rotate(90deg)}
.sb.r{margin-left:auto}
.sb.r svg{transform:rotate(-90deg)}
.sb.u svg{transform:rotate(180deg)}
.sb.d svg{transform:none}
.sb.d{margin-top:auto}
.th{border:1px solid #fff;outline:1px solid #b4c8f6;outline-offset:-2px;border-radius:2px;background:repeating-linear-gradient(90deg,#f0f5ff 0 1px,transparent 1px 2px) center/8px 6px no-repeat,linear-gradient(#cbdafd,#b8cbf8)}
.sbh .th{height:16px;margin-left:1px}
.w181{width:182px}.w79{width:80px}
.mth{width:16px;height:16px;border-radius:2px;border:1px solid #fff;background:repeating-linear-gradient(#6f8fd8 0 1px,#eef4ff 1px 2px) center/8px 8px no-repeat,#c1d3fb;margin-top:222px}
.mth.h{margin:0 0 0 339px;background:repeating-linear-gradient(90deg,#8ba5e0 0 1px,#eef4ff 1px 2px) center/8px 6px no-repeat,#c1d3fb}
.main-sb{width:18px}

/* Transversales */
.trans{left:358px;top:46px;width:977px;height:680px}
.ttools{display:flex;flex:none;height:32px;align-items:center;padding:0 5px 0 6px}
.ttools button{width:25px}
.ttools .l svg{width:18px;height:18px}
.ttools i{width:8px}
.coord{margin-left:auto;width:113px;height:20px;border:2px solid;border-color:#8c8a7c #fff #fff #8c8a7c;text-align:right;padding-right:4px}
.tbody{flex:1;display:flex;min-height:0;padding:2px 5px 5px 6px}
.tleft{width:187px;display:flex;flex-direction:column;flex:none;padding-top:1px}
.xtabs{display:flex;height:20px;flex:none;align-items:flex-end;padding-left:1px}
.tright .xtabs{padding-left:0}
.xtabs button{height:18px;padding:0;border:1px solid #91a7b4;border-bottom:0;border-radius:3px 3px 0 0;background:linear-gradient(#fff,#ece9d8);width:40px}
.xtabs .on{height:20px;margin-bottom:-1px;border-top:2px solid #ffa030;background:#fcfcfe;position:relative}
.xtabs button.w44{width:44px}.xtabs button.w50{width:52px}.xtabs button.w74{width:75px}
.xtabs .vol{justify-content:flex-start;margin-right:1px;padding-left:4px}
.xpane{flex:1;display:flex;min-height:0;padding:10px 6px 6px 8px;border:1px solid #919b9c;background:linear-gradient(#fcfcfe,#f4f3ee)}
.tbox{flex:1;min-width:0;display:grid;grid-template-columns:minmax(0,1fr) 17px;grid-template-rows:minmax(0,1fr) 17px;border:1px solid #7f9db9;background:#e6e6ff}
.tbox .tree{padding:1px 0 0 3px}
.tbox .sbv .th{width:16px;height:106px;margin-top:auto;background:repeating-linear-gradient(#f0f5ff 0 1px,transparent 1px 2px) center/7px 8px no-repeat,linear-gradient(90deg,#cbdafd,#b8cbf8)}
.tbox .sbv .d{margin-top:1px}
.corner{background:#ece9d8}
.slide{width:31px;flex:none;padding-top:110px}
.slide input{appearance:none;writing-mode:vertical-lr;direction:rtl;width:22px;height:370px;margin:0 0 0 4px;display:block;background:linear-gradient(90deg,#8c8a7c 1px,#fff 1px 3px,#b8b5a4 3px) center/4px 100% no-repeat}
.slide input::-webkit-slider-thumb{appearance:none;width:21px;height:11px;border:1px solid #000;border-radius:2px 6px 6px 2px;background:linear-gradient(#aa8800,#aa8800) center/12px 1px no-repeat,#ff0}
.tright{flex:1;display:flex;flex-direction:column;min-width:0}
.graph{position:relative;height:108px;flex:none;margin-bottom:9px;background:#000;border-top:1px solid #8c8a7c;color:#fff;font-weight:bold;font-size:14px;line-height:18px;display:flex;justify-content:space-between;padding:1px 8px 0 1px}
.graph b{position:relative}
.graph svg{position:absolute;left:0;top:0;width:100%;height:100%}
.pkv{color:#ff0}
.rp{padding:9px 7px 8px 11px}
.gridbox{flex:1;border:1px solid #000;background:#808080;overflow:hidden;min-width:0}
table{border-collapse:collapse;table-layout:fixed;width:640px}
.c40{width:40px}.c50{width:50px}.c60{width:60px}.c70{width:70px}.c100{width:100px}
td,th{height:18px;padding:0 0 0 4px;line-height:16px;border:solid #b0a890;border-width:0 1px 1px 0;white-space:nowrap;overflow:hidden;text-align:left}
th{background:#ece9d8;font-weight:normal;text-align:center;padding:0}
thead th{font-weight:bold;font-size:12px}
td{background:#0ff}
.sel{background:#00f;color:#fff}
td a{color:#00f}
.ck{padding:0;text-align:center}
.ck input{display:block;margin:1px auto;border:1px solid #1c5180}
.ck input::before{left:2px;top:2px;border-color:#21a121}
.st{padding:0 0 0 7px}
.cs{display:flex;align-items:center;height:17px}
.cs .arr{width:17px;height:16px;border:1px solid #fff}

/* layout tabs */
.lrow{display:flex;flex:none;height:18px;background:#ece9d8;margin-bottom:4px;padding-right:2px;align-items:flex-start}
.lnav{display:flex}
.lnav button{width:15px;height:17px;border:1px solid;border-color:#fff #aca899 #aca899 #fff}
.lnav svg{width:11px;height:11px}
.ltab{position:relative;height:17px;width:56px}
.ltab::after{content:"";position:absolute;right:0;top:0;width:1px;height:17px;background:#777;transform:skewX(-20deg)}
.ltab.on{background:#212830;color:#fff;width:52px;clip-path:polygon(0 0,100% 0,calc(100% - 6px) 100%,6px 100%)}
.hmain{margin:0 17px 0 auto;width:624px;padding:0 1px 0 6px}

/* command line */
.cmd{display:flex;flex:none;height:53px;background:#666;border-top:1px solid #999}
.cgrip{width:23px;flex:none;background:linear-gradient(#a0a0a0,#404040);display:flex;flex-direction:column;align-items:center}
.cgrip i{width:17px;height:6px;margin:3px 0 4px;background:radial-gradient(circle at 1px 1px,#ccc 1px,transparent 1px) 0 0/3px 3px}
.cgrip button{height:17px}
.cgrip button+button{margin-top:3px}
.cgrip svg.c{width:11px;height:11px}
.cgrip button+button svg.c{width:15px;height:15px}
.clines{flex:1;min-width:0;font:13px/16px "Liberation Mono",monospace}
.clines p{height:29px;padding:10px 0 0 3px;background:#c6c6c6;border-bottom:1px solid #777;white-space:nowrap;overflow:hidden}
.cin{display:flex;height:23px;align-items:center;background:#fff;padding-left:5px;gap:3px}
.cin button svg{width:14px;height:14px}
.cin input{border:0;outline:0;flex:1;padding:0 0 0 4px;font-style:italic}
.cin input::placeholder{color:#999;opacity:1}
.ctools{width:346px;height:26px;margin:2px 2px 0 2px;display:flex;align-items:center;justify-content:space-between;padding:0 8px 0 11px;background:#ece9d8;border-radius:2px}
.ctools button{width:22px}
.ctools .dd{width:10px}

/* status bar */
.status{display:flex;flex:none;height:23px;align-items:center;background:linear-gradient(#aaa,#777);border-top:1px solid #222;border-bottom:2px solid #3b78d8}
.status output{width:196px;padding-left:12px;white-space:nowrap}
.sbtns{display:flex}
.sbtns button{width:22px;height:20px;border-right:1px solid #555;background:linear-gradient(#c4c4c4,#909090)}
.sbtns .on{background:linear-gradient(#d8f0ff,#a8c8dc)}
.sright{margin-left:auto;display:flex;align-items:center;padding-right:5px}
.sright button{width:22px;height:20px}
.sright .tx{width:auto;padding:0 5px;gap:2px}
.sright .dd{width:14px}
.sright i{width:2px;height:18px;margin:0 4px;border-left:1px solid #555;border-right:1px solid #bbb}
.lit{background:#cfe8f8;border:1px solid #567}
```
